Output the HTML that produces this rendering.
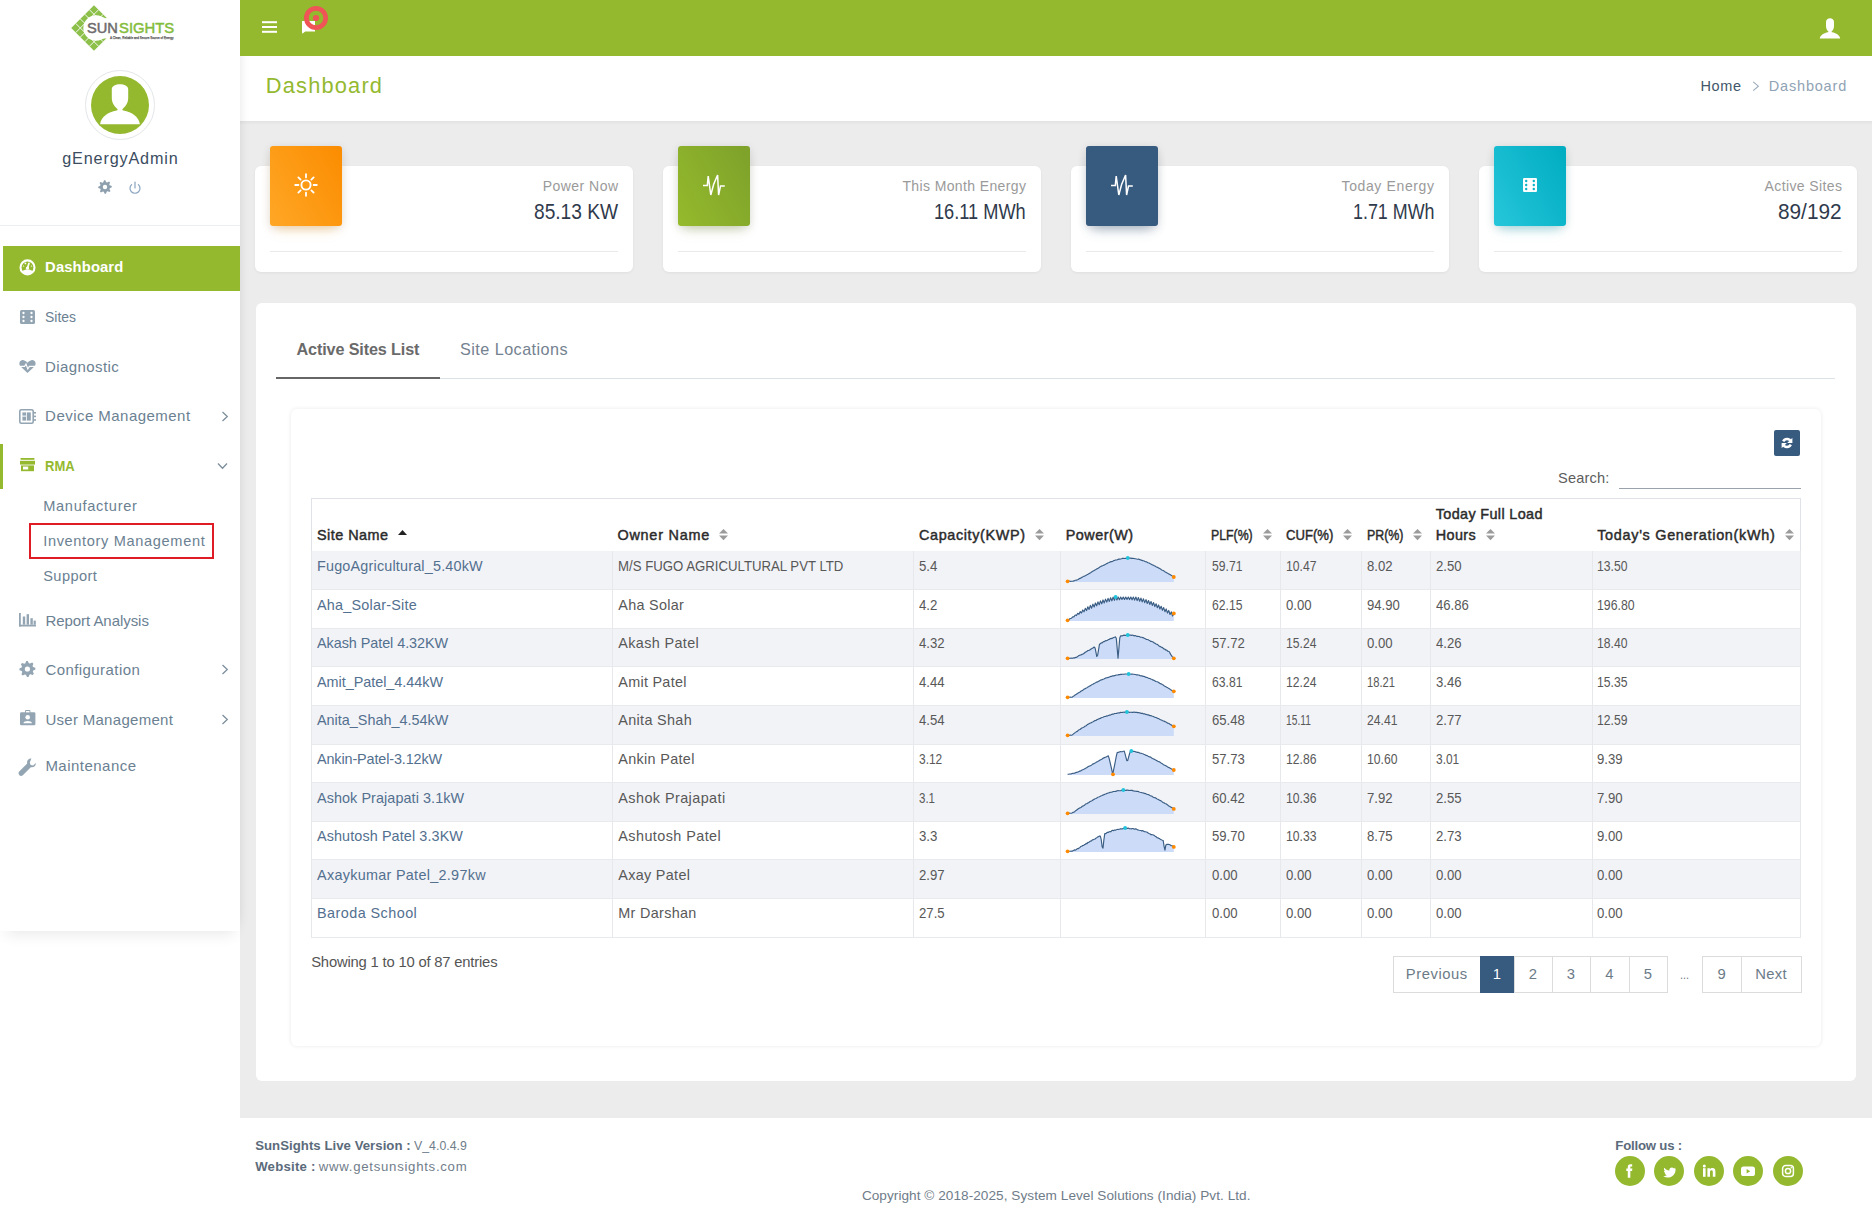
<!DOCTYPE html>
<html><head><meta charset="utf-8"><title>Dashboard</title>
<style>
*{box-sizing:border-box;margin:0;padding:0}
html,body{width:1872px;height:1223px;overflow:hidden;background:#fff;font-family:"Liberation Sans",sans-serif;position:relative}
.a{position:absolute}
svg.a{overflow:visible}
.t{position:absolute;white-space:nowrap;line-height:1}
</style></head><body>
<div class="a" style="left:240px;top:56px;width:1632px;height:65px;background:#fff"></div>
<div class="a" style="left:240px;top:121px;width:1632px;height:997px;background:#ececec"></div>
<div class="a" style="left:240px;top:121px;width:1632px;height:4px;background:linear-gradient(rgba(0,0,0,0.045),rgba(0,0,0,0))"></div>
<div class="a" style="left:0;top:0;width:240px;height:931px;background:#fff;box-shadow:0 10px 14px -6px rgba(0,0,0,0.08), 6px 0 12px -8px rgba(0,0,0,0.10)"></div>
<div class="a" style="left:240px;top:0px;width:1632px;height:56px;background:#94b92f"></div>
<svg class="a" style="left:63.9px;top:-2.3px;" width="60" height="60" viewBox="0 0 60 60"><polygon points="7.199999999999999,30 30,7.199999999999999 52.8,30 30,52.8" fill="#8cc04a"/><line x1="11.76" y1="34.56" x2="34.56" y2="11.76" stroke="#fff" stroke-width="0.9"/><line x1="11.76" y1="25.44" x2="34.56" y2="48.24" stroke="#fff" stroke-width="0.9"/><line x1="16.32" y1="39.12" x2="39.12" y2="16.32" stroke="#fff" stroke-width="0.9"/><line x1="16.32" y1="20.88" x2="39.12" y2="43.68" stroke="#fff" stroke-width="0.9"/><line x1="20.88" y1="43.68" x2="43.68" y2="20.88" stroke="#fff" stroke-width="0.9"/><line x1="20.88" y1="16.32" x2="43.68" y2="39.12" stroke="#fff" stroke-width="0.9"/><line x1="25.44" y1="48.24" x2="48.24" y2="25.44" stroke="#fff" stroke-width="0.9"/><line x1="25.44" y1="11.76" x2="48.24" y2="34.56" stroke="#fff" stroke-width="0.9"/><circle cx="32.10" cy="30" r="12.8" fill="#fff"/><rect x="32.10" y="20.10" width="40" height="20.40" fill="#fff"/></svg>
<div class="t" style="left:86.80px;top:20.16px;font-size:15.4px;color:#6e6a6b;transform:scaleX(0.9503);transform-origin:0 0;-webkit-text-stroke:0.5px #6e6a6b;">SUN</div>
<div class="t" style="left:118.60px;top:20.16px;font-size:15.4px;color:#84bd3c;transform:scaleX(0.9628);transform-origin:0 0;-webkit-text-stroke:0.5px #84bd3c;">SIGHTS</div>
<div class="t" style="left:109.50px;top:35.66px;font-size:4.3px;color:#555;transform:scaleX(0.7009);transform-origin:0 0;-webkit-text-stroke:0.25px #555;">A Clean, Reliable and Secure Source of Energy</div>
<div class="a" style="left:85.2px;top:70.2px;width:69.4px;height:69.4px;border-radius:50%;border:1px solid #e3e6e8;background:#fff"></div>
<svg class="a" style="left:91px;top:75.9px;" width="58" height="58" viewBox="0 0 58 58"><circle cx="29" cy="29" r="29" fill="#94b92f"/><path d="M20.8 13.2 C20.8 6.6 37.2 6.6 37.2 13.2 L37.2 22 C37.2 28 33.6 31 31.5 33 C31.2 33.8 31.5 34.3 32.3 34.6 C41 36.2 48 41 48.9 48.2 L9.1 48.2 C10 41 17 36.2 25.7 34.6 C26.5 34.3 26.8 33.8 26.5 33 C24.4 31 20.8 28 20.8 22 Z" fill="#fff"/></svg>
<div class="t" style="left:62.25px;top:150.09px;font-size:16.2px;color:#3b4d5f;letter-spacing:0.840px;">gEnergyAdmin</div>
<svg class="a" style="left:98px;top:180px;" width="14" height="14" viewBox="0 0 14 14"><path d="M6.00,0.27 L7.33,0.21 L8.21,2.15 L9.14,2.48 L11.05,1.54 L12.04,2.43 L11.29,4.43 L11.71,5.32 L13.73,6.00 L13.79,7.33 L11.85,8.21 L11.52,9.14 L12.46,11.05 L11.57,12.04 L9.57,11.29 L8.68,11.71 L8.00,13.73 L6.67,13.79 L5.79,11.85 L4.86,11.52 L2.95,12.46 L1.96,11.57 L2.71,9.57 L2.29,8.68 L0.27,8.00 L0.21,6.67 L2.15,5.79 L2.48,4.86 L1.54,2.95 L2.43,1.96 L4.43,2.71 L5.32,2.29 Z" fill="#8ea0ae"/><circle cx="7" cy="7" r="2.2" fill="#fff"/></svg>
<svg class="a" style="left:128px;top:180.5px;" width="14" height="14" viewBox="0 0 14 14"><path d="M3.6 3.6 A5 5 0 1 0 10.4 3.6" fill="none" stroke="#8aa4c0" stroke-width="1.2" stroke-linecap="round"/><line x1="7" y1="1.2" x2="7" y2="7" stroke="#8aa4c0" stroke-width="1.2" stroke-linecap="round"/></svg>
<div class="a" style="left:0px;top:225px;width:240px;height:1px;background:#eceef0"></div>
<div class="a" style="left:3px;top:246px;width:237px;height:45px;background:#94b92f"></div>
<svg class="a" style="left:19px;top:258.5px;" width="17" height="17" viewBox="0 0 17 17"><circle cx="8.5" cy="8.4" r="7" fill="none" stroke="#fff" stroke-width="2.1"/><path d="M3.4 12.2 C5.4 9.9 11.6 9.9 13.6 12.2 A7 7 0 0 1 3.4 12.2 Z" fill="#fff"/><line x1="8.5" y1="8.9" x2="10" y2="4.3" stroke="#fff" stroke-width="1.7" stroke-linecap="round"/><circle cx="8.5" cy="9.1" r="1.7" fill="#fff"/><circle cx="6.4" cy="4.4" r="0.85" fill="#fff"/><path d="M3.6 7.6 L5.4 7.6 L4.5 6.2 Z" fill="#fff"/><path d="M11.6 7.6 L13.4 7.6 L12.5 6.2 Z" fill="#fff"/></svg>
<div class="t" style="left:45.10px;top:259.67px;font-size:14.8px;color:#fff;font-weight:bold;letter-spacing:0.112px;">Dashboard</div>
<svg class="a" style="left:20px;top:309.8px;" width="15" height="14" viewBox="0 0 15 14"><rect x="0" y="0" width="15" height="14" rx="1.5" fill="#93a5b3"/><rect x="4.2" y="0" width="1" height="14" fill="#fff" opacity="0"/><circle cx="3.5" cy="3" r="1.15" fill="#fff"/><circle cx="3.5" cy="7" r="1.15" fill="#fff"/><circle cx="3.5" cy="11" r="1.15" fill="#fff"/><circle cx="11.5" cy="3" r="1.15" fill="#fff"/><circle cx="11.5" cy="7" r="1.15" fill="#fff"/><circle cx="11.5" cy="11" r="1.15" fill="#fff"/><rect x="5.6" y="1.5" width="3.8" height="11" fill="#93a5b3"/></svg>
<div class="t" style="left:45.10px;top:309.10px;font-size:15px;color:#6b8192;transform:scaleX(0.9296);transform-origin:0 0;">Sites</div>
<svg class="a" style="left:19px;top:359.5px;" width="17" height="13" viewBox="0 0 17 13"><path d="M8.5 13 L1.6 6.6 C-1.2 3.6 1.2 -0.6 4.6 0.2 C6.4 0.6 7.6 1.8 8.5 2.8 C9.4 1.8 10.6 0.6 12.4 0.2 C15.8 -0.6 18.2 3.6 15.4 6.6 Z" fill="#93a5b3"/><path d="M0 6.4 L5.6 6.4 L7 4 L8.8 9 L10.4 6.4 L17 6.4" fill="none" stroke="#fff" stroke-width="1.1"/></svg>
<div class="t" style="left:45.10px;top:358.50px;font-size:15px;color:#6b8192;letter-spacing:0.396px;">Diagnostic</div>
<svg class="a" style="left:19px;top:408.5px;" width="17" height="15" viewBox="0 0 17 15"><rect x="0.8" y="0.8" width="13.4" height="13.4" rx="1.5" fill="none" stroke="#93a5b3" stroke-width="1.6"/><rect x="3.4" y="3.4" width="3.6" height="3.2" fill="#93a5b3"/><rect x="3.4" y="7.6" width="3.6" height="4" fill="#93a5b3"/><rect x="7.8" y="3.4" width="4" height="8.2" fill="#93a5b3"/><rect x="15" y="3" width="2" height="1.6" fill="#93a5b3"/><rect x="15" y="6.6" width="2" height="1.6" fill="#93a5b3"/><rect x="15" y="10.2" width="2" height="1.6" fill="#93a5b3"/></svg>
<div class="t" style="left:45.10px;top:408.20px;font-size:15px;color:#6b8192;letter-spacing:0.464px;">Device Management</div>
<svg class="a" style="left:220.5px;top:411px;" width="8" height="11" viewBox="0 0 8 11"><path d="M1.5 1 L6.3 5.5 L1.5 10" fill="none" stroke="#7b8d9b" stroke-width="1.25"/></svg>
<div class="a" style="left:0px;top:444px;width:3px;height:45px;background:#94b92f"></div>
<svg class="a" style="left:20px;top:457.6px;" width="15" height="13.2" viewBox="0 0 15 13.2"><rect x="0.6" y="0" width="13.8" height="1.8" fill="#94b92f"/><path d="M0 2.8 L15 2.8 L15 6.6 L0 6.6 Z" fill="#94b92f"/><rect x="1" y="7.4" width="13" height="5.8" fill="#94b92f"/><rect x="3" y="8.6" width="5.2" height="2.9" fill="#fff"/><rect x="1" y="11.5" width="0" height="0" fill="#94b92f"/><rect x="0" y="0" width="0" height="0" fill="#94b92f"/></svg>
<div class="t" style="left:45.10px;top:457.60px;font-size:15px;color:#94b92f;font-weight:bold;transform:scaleX(0.8665);transform-origin:0 0;">RMA</div>
<svg class="a" style="left:217px;top:462px;" width="11" height="8" viewBox="0 0 11 8"><path d="M1 1.5 L5.5 6.3 L10 1.5" fill="none" stroke="#7b8d9b" stroke-width="1.25"/></svg>
<div class="t" style="left:43.20px;top:499.24px;font-size:14.6px;color:#6b8192;letter-spacing:0.707px;">Manufacturer</div>
<div class="a" style="left:29px;top:523.3px;width:185px;height:35.6px;border:2px solid #df1b25"></div>
<div class="t" style="left:43.20px;top:534.04px;font-size:14.6px;color:#6b8192;letter-spacing:0.646px;">Inventory Management</div>
<div class="t" style="left:43.20px;top:568.84px;font-size:14.6px;color:#6b8192;letter-spacing:0.427px;">Support</div>
<svg class="a" style="left:19px;top:613.3px;" width="17" height="13.5" viewBox="0 0 17 13.5"><rect x="0" y="0" width="1.8" height="13.5" fill="#93a5b3"/><rect x="0" y="11.7" width="17" height="1.8" fill="#93a5b3"/><rect x="3.8" y="3.5" width="2.4" height="8.2" fill="#93a5b3"/><rect x="7.6" y="1.2" width="2.4" height="10.5" fill="#93a5b3"/><rect x="11.4" y="5.2" width="2.4" height="6.5" fill="#93a5b3"/><rect x="14.6" y="7.6" width="2.2" height="4.1" fill="#93a5b3"/></svg>
<div class="t" style="left:45.40px;top:612.70px;font-size:15px;color:#6b8192;letter-spacing:-0.051px;">Report Analysis</div>
<svg class="a" style="left:19px;top:660.7px;" width="17" height="16" viewBox="0 0 17 16"><path d="M7.23,0.09 L8.79,0.01 L9.86,2.18 L10.97,2.58 L13.17,1.57 L14.33,2.63 L13.55,4.92 L14.05,5.98 L16.31,6.83 L16.39,8.39 L14.22,9.46 L13.82,10.57 L14.83,12.77 L13.77,13.93 L11.48,13.15 L10.42,13.65 L9.57,15.91 L8.01,15.99 L6.94,13.82 L5.83,13.42 L3.63,14.43 L2.47,13.37 L3.25,11.08 L2.75,10.02 L0.49,9.17 L0.41,7.61 L2.58,6.54 L2.98,5.43 L1.97,3.23 L3.03,2.07 L5.32,2.85 L6.38,2.35 Z" fill="#93a5b3"/><circle cx="8.4" cy="8" r="2.6" fill="#fff"/></svg>
<div class="t" style="left:45.40px;top:661.90px;font-size:15px;color:#6b8192;letter-spacing:0.431px;">Configuration</div>
<svg class="a" style="left:220.5px;top:664px;" width="8" height="11" viewBox="0 0 8 11"><path d="M1.5 1 L6.3 5.5 L1.5 10" fill="none" stroke="#7b8d9b" stroke-width="1.25"/></svg>
<svg class="a" style="left:19.6px;top:710.4px;" width="15.4" height="15.3" viewBox="0 0 15.4 15.3"><rect x="0" y="2.2" width="15.4" height="13.1" rx="1.4" fill="#93a5b3"/><rect x="5" y="0" width="5.4" height="3.6" rx="1" fill="#93a5b3"/><rect x="5.9" y="1" width="3.6" height="1.4" fill="#fff"/><circle cx="7.7" cy="7.2" r="2.3" fill="#fff"/><path d="M3.4 13.2 C3.6 10.4 11.8 10.4 12 13.2 Z" fill="#fff"/></svg>
<div class="t" style="left:45.40px;top:711.70px;font-size:15px;color:#6b8192;letter-spacing:0.293px;">User Management</div>
<svg class="a" style="left:220.5px;top:714px;" width="8" height="11" viewBox="0 0 8 11"><path d="M1.5 1 L6.3 5.5 L1.5 10" fill="none" stroke="#7b8d9b" stroke-width="1.25"/></svg>
<svg class="a" style="left:17.7px;top:757.5px;" width="18.5" height="18.5" viewBox="0 0 18.5 18.5"><path d="M13.4 0.6 C10.6 0.2 8.4 2.8 9.2 5.6 L1.2 13.6 C0.2 14.6 0.4 16.4 1.4 17.2 C2.4 18.2 3.8 18.2 4.8 17.2 L12.8 9.2 C15.6 10 18.2 7.8 17.8 5 L15.2 7.4 L12.6 7 L11.8 4.4 Z" fill="#93a5b3"/></svg>
<div class="t" style="left:45.40px;top:757.80px;font-size:15px;color:#6b8192;letter-spacing:0.481px;">Maintenance</div>
<svg class="a" style="left:262px;top:21px;" width="15" height="12" viewBox="0 0 15 12"><rect x="0" y="0.2" width="15" height="2" fill="#fff"/><rect x="0" y="5" width="15" height="2" fill="#fff"/><rect x="0" y="9.8" width="15" height="2" fill="#fff"/></svg>
<svg class="a" style="left:300px;top:19px;" width="17" height="16" viewBox="0 0 17 16"><path d="M2 2 L15 2 L15 12.5 L5.2 12.5 L2.3 14.8 L2 12.5 Z" fill="#fff"/></svg>
<svg class="a" style="left:303.1px;top:5.3px;" width="26" height="26" viewBox="0 0 26 26"><circle cx="13" cy="13" r="9.65" fill="none" stroke="#ef5457" stroke-width="4.7"/><circle cx="13" cy="13" r="3.1" fill="#ef5457"/></svg>
<svg class="a" style="left:1819px;top:17px;" width="22" height="22" viewBox="0 0 22 22"><path d="M7 5 C7 0 15 0 15 5 L15 9 C15 12 13.6 13.6 12.6 14.4 C12.4 14.8 12.6 15.1 13 15.2 C17.6 16 20.8 18.4 21.2 21.5 L0.8 21.5 C1.2 18.4 4.4 16 9 15.2 C9.4 15.1 9.6 14.8 9.4 14.4 C8.4 13.6 7 12 7 9 Z" fill="#fff"/></svg>
<div class="t" style="left:265.80px;top:74.65px;font-size:21.8px;color:#94b92f;letter-spacing:1.194px;">Dashboard</div>
<div class="t" style="left:1700.40px;top:78.63px;font-size:14.5px;color:#42576a;letter-spacing:0.674px;">Home</div>
<svg class="a" style="left:1751.5px;top:81px;" width="8" height="10.5" viewBox="0 0 8 10.5"><path d="M1.2 0.8 L6.4 5.2 L1.2 9.7" fill="none" stroke="#9aabb9" stroke-width="1.1"/></svg>
<div class="t" style="left:1768.80px;top:78.63px;font-size:14.5px;color:#90a3b4;letter-spacing:0.808px;">Dashboard</div>
<div class="a" style="left:255px;top:166px;width:378px;height:106px;background:#fff;border-radius:6px;box-shadow:0 1px 3px rgba(0,0,0,0.06)"></div>
<div class="a" style="left:270px;top:146px;width:72px;height:80px;border-radius:3px;background:linear-gradient(60deg,#ffa726,#fb8c00);box-shadow:0 8px 12px -6px rgba(255,152,0,0.35), 0 2px 10px rgba(0,0,0,0.12)"></div>
<div class="a" style="left:270px;top:251px;width:348px;height:1px;background:#e9e9e9"></div>
<div class="t" style="left:542.70px;top:179.45px;font-size:14px;color:#9a9a9a;letter-spacing:0.465px;">Power Now</div>
<div class="t" style="left:533.90px;top:200.85px;font-size:21.8px;color:#2f3a4c;transform:scaleX(0.8785);transform-origin:0 0;">85.13 KW</div>
<svg class="a" style="left:294.4px;top:172.9px;" width="24" height="24" viewBox="0 0 24 24"><circle cx="12" cy="12" r="4.6" fill="none" stroke="#fff" stroke-width="1.9"/><line x1="19.60" y1="12.00" x2="22.80" y2="12.00" stroke="#fff" stroke-width="1.8" stroke-linecap="round"/><line x1="17.37" y1="17.37" x2="19.64" y2="19.64" stroke="#fff" stroke-width="1.8" stroke-linecap="round"/><line x1="12.00" y1="19.60" x2="12.00" y2="22.80" stroke="#fff" stroke-width="1.8" stroke-linecap="round"/><line x1="6.63" y1="17.37" x2="4.36" y2="19.64" stroke="#fff" stroke-width="1.8" stroke-linecap="round"/><line x1="4.40" y1="12.00" x2="1.20" y2="12.00" stroke="#fff" stroke-width="1.8" stroke-linecap="round"/><line x1="6.63" y1="6.63" x2="4.36" y2="4.36" stroke="#fff" stroke-width="1.8" stroke-linecap="round"/><line x1="12.00" y1="4.40" x2="12.00" y2="1.20" stroke="#fff" stroke-width="1.8" stroke-linecap="round"/><line x1="17.37" y1="6.63" x2="19.64" y2="4.36" stroke="#fff" stroke-width="1.8" stroke-linecap="round"/></svg>
<div class="a" style="left:663px;top:166px;width:378px;height:106px;background:#fff;border-radius:6px;box-shadow:0 1px 3px rgba(0,0,0,0.06)"></div>
<div class="a" style="left:678px;top:146px;width:72px;height:80px;border-radius:3px;background:linear-gradient(60deg,#95ba2c,#7da12a);box-shadow:0 8px 12px -6px rgba(120,150,40,0.35), 0 2px 10px rgba(0,0,0,0.12)"></div>
<div class="a" style="left:678px;top:251px;width:348px;height:1px;background:#e9e9e9"></div>
<div class="t" style="left:902.40px;top:179.45px;font-size:14px;color:#9a9a9a;letter-spacing:0.381px;">This Month Energy</div>
<div class="t" style="left:934.30px;top:200.85px;font-size:21.8px;color:#2f3a4c;transform:scaleX(0.8347);transform-origin:0 0;">16.11 MWh</div>
<svg class="a" style="left:703px;top:174.8px;" width="22" height="22" viewBox="0 0 22 22"><path d="M0 10.5 L4.3 10.5 L5.2 1 L7.8 20 L10.6 9.5 L14.6 0 L15.6 20 L17.5 11 L21.8 11" fill="none" stroke="#fff" stroke-width="1.5" stroke-linejoin="miter" stroke-miterlimit="3"/></svg>
<div class="a" style="left:1071px;top:166px;width:378px;height:106px;background:#fff;border-radius:6px;box-shadow:0 1px 3px rgba(0,0,0,0.06)"></div>
<div class="a" style="left:1086px;top:146px;width:72px;height:80px;border-radius:3px;background:#375a7f;box-shadow:0 8px 12px -6px rgba(55,90,127,0.45), 0 2px 10px rgba(0,0,0,0.12)"></div>
<div class="a" style="left:1086px;top:251px;width:348px;height:1px;background:#e9e9e9"></div>
<div class="t" style="left:1341.50px;top:179.45px;font-size:14px;color:#9a9a9a;letter-spacing:0.626px;">Today Energy</div>
<div class="t" style="left:1352.50px;top:200.85px;font-size:21.8px;color:#2f3a4c;transform:scaleX(0.8203);transform-origin:0 0;">1.71 MWh</div>
<svg class="a" style="left:1111px;top:174.8px;" width="22" height="22" viewBox="0 0 22 22"><path d="M0 10.5 L4.3 10.5 L5.2 1 L7.8 20 L10.6 9.5 L14.6 0 L15.6 20 L17.5 11 L21.8 11" fill="none" stroke="#fff" stroke-width="1.5" stroke-linejoin="miter" stroke-miterlimit="3"/></svg>
<div class="a" style="left:1479px;top:166px;width:378px;height:106px;background:#fff;border-radius:6px;box-shadow:0 1px 3px rgba(0,0,0,0.06)"></div>
<div class="a" style="left:1494px;top:146px;width:72px;height:80px;border-radius:3px;background:linear-gradient(60deg,#26c6da,#00acc1);box-shadow:0 8px 12px -6px rgba(0,172,193,0.35), 0 2px 10px rgba(0,0,0,0.12)"></div>
<div class="a" style="left:1494px;top:251px;width:348px;height:1px;background:#e9e9e9"></div>
<div class="t" style="left:1764.50px;top:179.45px;font-size:14px;color:#9a9a9a;letter-spacing:0.396px;">Active Sites</div>
<div class="t" style="left:1778.40px;top:200.85px;font-size:21.8px;color:#2f3a4c;transform:scaleX(0.9538);transform-origin:0 0;">89/192</div>
<svg class="a" style="left:1523px;top:178px;" width="14" height="14" viewBox="0 0 14 14"><rect x="0" y="0" width="14" height="14" rx="1.3" fill="#fff"/><circle cx="3.2" cy="3" r="1.2" fill="#0fb3c8"/><circle cx="3.2" cy="7" r="1.2" fill="#0fb3c8"/><circle cx="3.2" cy="11" r="1.2" fill="#0fb3c8"/><circle cx="10.8" cy="3" r="1.2" fill="#0fb3c8"/><circle cx="10.8" cy="7" r="1.2" fill="#0fb3c8"/><circle cx="10.8" cy="11" r="1.2" fill="#0fb3c8"/><rect x="5.6" y="0" width="2.8" height="14" fill="#fff"/></svg>
<div class="a" style="left:256px;top:303px;width:1600px;height:778px;background:#fff;border-radius:6px"></div>
<div class="t" style="left:296.50px;top:340.79px;font-size:16.2px;color:#6a6a6a;font-weight:bold;letter-spacing:-0.128px;">Active Sites List</div>
<div class="t" style="left:460.00px;top:340.79px;font-size:16.2px;color:#74828f;letter-spacing:0.456px;">Site Locations</div>
<div class="a" style="left:276px;top:377.8px;width:1559px;height:1px;background:#dde2e7"></div>
<div class="a" style="left:276px;top:376.5px;width:164px;height:2.4px;background:#666"></div>
<div class="a" style="left:291px;top:409px;width:1530px;height:637px;background:#fff;border-radius:6px;box-shadow:0 0 4px rgba(0,0,0,0.09)"></div>
<div class="a" style="left:1774px;top:430.3px;width:26px;height:25.7px;background:#375a7f;border-radius:2px"></div>
<svg class="a" style="left:1781px;top:437px;" width="12" height="12" viewBox="0 0 12 12"><path d="M10 4.8 A4.3 4.3 0 0 0 2.2 4.4" fill="none" stroke="#fff" stroke-width="2.5"/><path d="M11.4 0.8 L11.4 6 L6.2 6 Z" fill="#fff"/><path d="M2 7.2 A4.3 4.3 0 0 0 9.8 7.6" fill="none" stroke="#fff" stroke-width="2.5"/><path d="M0.6 11.2 L0.6 6 L5.8 6 Z" fill="#fff"/></svg>
<div class="t" style="left:1558.10px;top:470.84px;font-size:14.6px;color:#5d5d5d;letter-spacing:0.147px;">Search:</div>
<div class="a" style="left:1619px;top:487.6px;width:182px;height:1.2px;background:#9aa3ab"></div>
<div class="a" style="left:311px;top:498px;width:1489.5px;height:53.0px;border:1px solid #dfe3e8;border-bottom:none;background:#fff"></div>
<div class="a" style="left:311px;top:551.00px;width:1489.5px;height:38.60px;background:#f2f3f7"></div>
<div class="a" style="left:311px;top:589.60px;width:1489.5px;height:38.60px;background:#fff"></div>
<div class="a" style="left:311px;top:628.20px;width:1489.5px;height:38.60px;background:#f2f3f7"></div>
<div class="a" style="left:311px;top:666.80px;width:1489.5px;height:38.60px;background:#fff"></div>
<div class="a" style="left:311px;top:705.40px;width:1489.5px;height:38.60px;background:#f2f3f7"></div>
<div class="a" style="left:311px;top:744.00px;width:1489.5px;height:38.60px;background:#fff"></div>
<div class="a" style="left:311px;top:782.60px;width:1489.5px;height:38.60px;background:#f2f3f7"></div>
<div class="a" style="left:311px;top:821.20px;width:1489.5px;height:38.60px;background:#fff"></div>
<div class="a" style="left:311px;top:859.80px;width:1489.5px;height:38.60px;background:#f2f3f7"></div>
<div class="a" style="left:311px;top:898.40px;width:1489.5px;height:38.60px;background:#fff"></div>
<div class="a" style="left:310.5px;top:551.0px;width:1px;height:386.00px;background:#e6e8ec"></div>
<div class="a" style="left:612.0px;top:551.0px;width:1px;height:386.00px;background:#e6e8ec"></div>
<div class="a" style="left:913.0px;top:551.0px;width:1px;height:386.00px;background:#e6e8ec"></div>
<div class="a" style="left:1060.0px;top:551.0px;width:1px;height:386.00px;background:#e6e8ec"></div>
<div class="a" style="left:1205.1px;top:551.0px;width:1px;height:386.00px;background:#e6e8ec"></div>
<div class="a" style="left:1279.8px;top:551.0px;width:1px;height:386.00px;background:#e6e8ec"></div>
<div class="a" style="left:1360.9px;top:551.0px;width:1px;height:386.00px;background:#e6e8ec"></div>
<div class="a" style="left:1430.0px;top:551.0px;width:1px;height:386.00px;background:#e6e8ec"></div>
<div class="a" style="left:1592.0px;top:551.0px;width:1px;height:386.00px;background:#e6e8ec"></div>
<div class="a" style="left:1800.0px;top:551.0px;width:1px;height:386.00px;background:#e6e8ec"></div>
<div class="a" style="left:311px;top:498px;width:1px;height:53.0px;background:#dfe3e8"></div>
<div class="a" style="left:1799.5px;top:498px;width:1px;height:53.0px;background:#dfe3e8"></div>
<div class="a" style="left:311px;top:589.10px;width:1489.5px;height:1px;background:#e8eaee"></div>
<div class="a" style="left:311px;top:627.70px;width:1489.5px;height:1px;background:#e8eaee"></div>
<div class="a" style="left:311px;top:666.30px;width:1489.5px;height:1px;background:#e8eaee"></div>
<div class="a" style="left:311px;top:704.90px;width:1489.5px;height:1px;background:#e8eaee"></div>
<div class="a" style="left:311px;top:743.50px;width:1489.5px;height:1px;background:#e8eaee"></div>
<div class="a" style="left:311px;top:782.10px;width:1489.5px;height:1px;background:#e8eaee"></div>
<div class="a" style="left:311px;top:820.70px;width:1489.5px;height:1px;background:#e8eaee"></div>
<div class="a" style="left:311px;top:859.30px;width:1489.5px;height:1px;background:#e8eaee"></div>
<div class="a" style="left:311px;top:897.90px;width:1489.5px;height:1px;background:#e8eaee"></div>
<div class="a" style="left:311px;top:936.50px;width:1489.5px;height:1px;background:#e8eaee"></div>
<div class="t" style="left:317.00px;top:528.11px;font-size:14.4px;color:#2b2b2b;letter-spacing:0.472px;-webkit-text-stroke:0.45px #2b2b2b;">Site Name</div>
<div class="t" style="left:617.40px;top:528.11px;font-size:14.4px;color:#2b2b2b;letter-spacing:0.797px;-webkit-text-stroke:0.45px #2b2b2b;">Owner Name</div>
<div class="t" style="left:919.00px;top:528.11px;font-size:14.4px;color:#2b2b2b;letter-spacing:0.632px;-webkit-text-stroke:0.45px #2b2b2b;">Capacity(KWP)</div>
<div class="t" style="left:1065.70px;top:528.11px;font-size:14.4px;color:#2b2b2b;letter-spacing:0.486px;-webkit-text-stroke:0.45px #2b2b2b;">Power(W)</div>
<div class="t" style="left:1211.20px;top:528.11px;font-size:14.4px;color:#2b2b2b;transform:scaleX(0.8544);transform-origin:0 0;-webkit-text-stroke:0.45px #2b2b2b;">PLF(%)</div>
<div class="t" style="left:1285.70px;top:528.11px;font-size:14.4px;color:#2b2b2b;transform:scaleX(0.9098);transform-origin:0 0;-webkit-text-stroke:0.45px #2b2b2b;">CUF(%)</div>
<div class="t" style="left:1366.50px;top:528.11px;font-size:14.4px;color:#2b2b2b;transform:scaleX(0.8609);transform-origin:0 0;-webkit-text-stroke:0.45px #2b2b2b;">PR(%)</div>
<div class="t" style="left:1435.80px;top:506.81px;font-size:14.4px;color:#2b2b2b;letter-spacing:0.359px;-webkit-text-stroke:0.45px #2b2b2b;">Today Full Load</div>
<div class="t" style="left:1435.80px;top:528.11px;font-size:14.4px;color:#2b2b2b;letter-spacing:0.347px;-webkit-text-stroke:0.45px #2b2b2b;">Hours</div>
<div class="t" style="left:1597.20px;top:528.11px;font-size:14.4px;color:#2b2b2b;letter-spacing:0.713px;-webkit-text-stroke:0.45px #2b2b2b;">Today's Generation(kWh)</div>
<svg class="a" style="left:397.8px;top:529.8px;" width="9" height="5" viewBox="0 0 9 5"><path d="M4.5 0 L9 5 L0 5 Z" fill="#222"/></svg>
<svg class="a" style="left:719.4px;top:529.4px;" width="9" height="11.2" viewBox="0 0 9 11.2"><path d="M4.5 0 L9 4.6 L0 4.6 Z" fill="#9b9b9b"/><path d="M0 6.6 L9 6.6 L4.5 11.2 Z" fill="#9b9b9b"/></svg>
<svg class="a" style="left:1034.6px;top:529.4px;" width="9" height="11.2" viewBox="0 0 9 11.2"><path d="M4.5 0 L9 4.6 L0 4.6 Z" fill="#9b9b9b"/><path d="M0 6.6 L9 6.6 L4.5 11.2 Z" fill="#9b9b9b"/></svg>
<svg class="a" style="left:1263px;top:529.4px;" width="9" height="11.2" viewBox="0 0 9 11.2"><path d="M4.5 0 L9 4.6 L0 4.6 Z" fill="#9b9b9b"/><path d="M0 6.6 L9 6.6 L4.5 11.2 Z" fill="#9b9b9b"/></svg>
<svg class="a" style="left:1343.2px;top:529.4px;" width="9" height="11.2" viewBox="0 0 9 11.2"><path d="M4.5 0 L9 4.6 L0 4.6 Z" fill="#9b9b9b"/><path d="M0 6.6 L9 6.6 L4.5 11.2 Z" fill="#9b9b9b"/></svg>
<svg class="a" style="left:1413.2px;top:529.4px;" width="9" height="11.2" viewBox="0 0 9 11.2"><path d="M4.5 0 L9 4.6 L0 4.6 Z" fill="#9b9b9b"/><path d="M0 6.6 L9 6.6 L4.5 11.2 Z" fill="#9b9b9b"/></svg>
<svg class="a" style="left:1485.7px;top:529.4px;" width="9" height="11.2" viewBox="0 0 9 11.2"><path d="M4.5 0 L9 4.6 L0 4.6 Z" fill="#9b9b9b"/><path d="M0 6.6 L9 6.6 L4.5 11.2 Z" fill="#9b9b9b"/></svg>
<svg class="a" style="left:1784.5px;top:529.4px;" width="9" height="11.2" viewBox="0 0 9 11.2"><path d="M4.5 0 L9 4.6 L0 4.6 Z" fill="#9b9b9b"/><path d="M0 6.6 L9 6.6 L4.5 11.2 Z" fill="#9b9b9b"/></svg>
<div class="t" style="left:317.00px;top:559.01px;font-size:14.4px;color:#53708f;letter-spacing:0.186px;">FugoAgricultural_5.40kW</div>
<div class="t" style="left:618.30px;top:559.01px;font-size:14.4px;color:#585858;transform:scaleX(0.9172);transform-origin:0 0;">M/S FUGO AGRICULTURAL PVT LTD</div>
<div class="t" style="left:919.40px;top:559.01px;font-size:14.4px;color:#585858;transform:scaleX(0.9200);transform-origin:0 0;">5.4</div>
<div class="t" style="left:1211.60px;top:559.01px;font-size:14.4px;color:#585858;transform:scaleX(0.8444);transform-origin:0 0;">59.71</div>
<div class="t" style="left:1286.00px;top:559.01px;font-size:14.4px;color:#585858;transform:scaleX(0.8444);transform-origin:0 0;">10.47</div>
<div class="t" style="left:1366.80px;top:559.01px;font-size:14.4px;color:#585858;transform:scaleX(0.9143);transform-origin:0 0;">8.02</div>
<div class="t" style="left:1436.00px;top:559.01px;font-size:14.4px;color:#585858;transform:scaleX(0.9143);transform-origin:0 0;">2.50</div>
<div class="t" style="left:1597.00px;top:559.01px;font-size:14.4px;color:#585858;transform:scaleX(0.8444);transform-origin:0 0;">13.50</div>
<div class="t" style="left:317.00px;top:597.61px;font-size:14.4px;color:#53708f;letter-spacing:0.225px;">Aha_Solar-Site</div>
<div class="t" style="left:618.30px;top:597.61px;font-size:14.4px;color:#585858;letter-spacing:0.284px;">Aha Solar</div>
<div class="t" style="left:919.40px;top:597.61px;font-size:14.4px;color:#585858;transform:scaleX(0.9200);transform-origin:0 0;">4.2</div>
<div class="t" style="left:1211.60px;top:597.61px;font-size:14.4px;color:#585858;transform:scaleX(0.8444);transform-origin:0 0;">62.15</div>
<div class="t" style="left:1286.00px;top:597.61px;font-size:14.4px;color:#585858;transform:scaleX(0.9143);transform-origin:0 0;">0.00</div>
<div class="t" style="left:1366.80px;top:597.61px;font-size:14.4px;color:#585858;transform:scaleX(0.9111);transform-origin:0 0;">94.90</div>
<div class="t" style="left:1436.00px;top:597.61px;font-size:14.4px;color:#585858;transform:scaleX(0.9111);transform-origin:0 0;">46.86</div>
<div class="t" style="left:1597.00px;top:597.61px;font-size:14.4px;color:#585858;transform:scaleX(0.8545);transform-origin:0 0;">196.80</div>
<div class="t" style="left:317.00px;top:636.21px;font-size:14.4px;color:#53708f;letter-spacing:-0.050px;">Akash Patel 4.32KW</div>
<div class="t" style="left:618.30px;top:636.21px;font-size:14.4px;color:#585858;letter-spacing:0.363px;">Akash Patel</div>
<div class="t" style="left:919.40px;top:636.21px;font-size:14.4px;color:#585858;transform:scaleX(0.9143);transform-origin:0 0;">4.32</div>
<div class="t" style="left:1211.60px;top:636.21px;font-size:14.4px;color:#585858;transform:scaleX(0.9111);transform-origin:0 0;">57.72</div>
<div class="t" style="left:1286.00px;top:636.21px;font-size:14.4px;color:#585858;transform:scaleX(0.8444);transform-origin:0 0;">15.24</div>
<div class="t" style="left:1366.80px;top:636.21px;font-size:14.4px;color:#585858;transform:scaleX(0.9143);transform-origin:0 0;">0.00</div>
<div class="t" style="left:1436.00px;top:636.21px;font-size:14.4px;color:#585858;transform:scaleX(0.9143);transform-origin:0 0;">4.26</div>
<div class="t" style="left:1597.00px;top:636.21px;font-size:14.4px;color:#585858;transform:scaleX(0.8444);transform-origin:0 0;">18.40</div>
<div class="t" style="left:317.00px;top:674.81px;font-size:14.4px;color:#53708f;letter-spacing:-0.025px;">Amit_Patel_4.44kW</div>
<div class="t" style="left:618.30px;top:674.81px;font-size:14.4px;color:#585858;letter-spacing:0.279px;">Amit Patel</div>
<div class="t" style="left:919.40px;top:674.81px;font-size:14.4px;color:#585858;transform:scaleX(0.9143);transform-origin:0 0;">4.44</div>
<div class="t" style="left:1211.60px;top:674.81px;font-size:14.4px;color:#585858;transform:scaleX(0.8444);transform-origin:0 0;">63.81</div>
<div class="t" style="left:1286.00px;top:674.81px;font-size:14.4px;color:#585858;transform:scaleX(0.8444);transform-origin:0 0;">12.24</div>
<div class="t" style="left:1366.80px;top:674.81px;font-size:14.4px;color:#585858;transform:scaleX(0.7778);transform-origin:0 0;">18.21</div>
<div class="t" style="left:1436.00px;top:674.81px;font-size:14.4px;color:#585858;transform:scaleX(0.9143);transform-origin:0 0;">3.46</div>
<div class="t" style="left:1597.00px;top:674.81px;font-size:14.4px;color:#585858;transform:scaleX(0.8444);transform-origin:0 0;">15.35</div>
<div class="t" style="left:317.00px;top:713.41px;font-size:14.4px;color:#53708f;letter-spacing:0.006px;">Anita_Shah_4.54kW</div>
<div class="t" style="left:618.30px;top:713.41px;font-size:14.4px;color:#585858;letter-spacing:0.333px;">Anita Shah</div>
<div class="t" style="left:919.40px;top:713.41px;font-size:14.4px;color:#585858;transform:scaleX(0.9143);transform-origin:0 0;">4.54</div>
<div class="t" style="left:1211.60px;top:713.41px;font-size:14.4px;color:#585858;transform:scaleX(0.9111);transform-origin:0 0;">65.48</div>
<div class="t" style="left:1286.00px;top:713.41px;font-size:14.4px;color:#585858;transform:scaleX(0.7111);transform-origin:0 0;">15.11</div>
<div class="t" style="left:1366.80px;top:713.41px;font-size:14.4px;color:#585858;transform:scaleX(0.8444);transform-origin:0 0;">24.41</div>
<div class="t" style="left:1436.00px;top:713.41px;font-size:14.4px;color:#585858;transform:scaleX(0.9143);transform-origin:0 0;">2.77</div>
<div class="t" style="left:1597.00px;top:713.41px;font-size:14.4px;color:#585858;transform:scaleX(0.8444);transform-origin:0 0;">12.59</div>
<div class="t" style="left:317.00px;top:752.01px;font-size:14.4px;color:#53708f;letter-spacing:-0.122px;">Ankin-Patel-3.12kW</div>
<div class="t" style="left:618.30px;top:752.01px;font-size:14.4px;color:#585858;letter-spacing:0.323px;">Ankin Patel</div>
<div class="t" style="left:919.40px;top:752.01px;font-size:14.4px;color:#585858;transform:scaleX(0.8286);transform-origin:0 0;">3.12</div>
<div class="t" style="left:1211.60px;top:752.01px;font-size:14.4px;color:#585858;transform:scaleX(0.9111);transform-origin:0 0;">57.73</div>
<div class="t" style="left:1286.00px;top:752.01px;font-size:14.4px;color:#585858;transform:scaleX(0.8444);transform-origin:0 0;">12.86</div>
<div class="t" style="left:1366.80px;top:752.01px;font-size:14.4px;color:#585858;transform:scaleX(0.8444);transform-origin:0 0;">10.60</div>
<div class="t" style="left:1436.00px;top:752.01px;font-size:14.4px;color:#585858;transform:scaleX(0.8286);transform-origin:0 0;">3.01</div>
<div class="t" style="left:1597.00px;top:752.01px;font-size:14.4px;color:#585858;transform:scaleX(0.9143);transform-origin:0 0;">9.39</div>
<div class="t" style="left:317.00px;top:790.61px;font-size:14.4px;color:#53708f;letter-spacing:0.076px;">Ashok Prajapati 3.1kW</div>
<div class="t" style="left:618.30px;top:790.61px;font-size:14.4px;color:#585858;letter-spacing:0.431px;">Ashok Prajapati</div>
<div class="t" style="left:919.40px;top:790.61px;font-size:14.4px;color:#585858;transform:scaleX(0.8000);transform-origin:0 0;">3.1</div>
<div class="t" style="left:1211.60px;top:790.61px;font-size:14.4px;color:#585858;transform:scaleX(0.9111);transform-origin:0 0;">60.42</div>
<div class="t" style="left:1286.00px;top:790.61px;font-size:14.4px;color:#585858;transform:scaleX(0.8444);transform-origin:0 0;">10.36</div>
<div class="t" style="left:1366.80px;top:790.61px;font-size:14.4px;color:#585858;transform:scaleX(0.9143);transform-origin:0 0;">7.92</div>
<div class="t" style="left:1436.00px;top:790.61px;font-size:14.4px;color:#585858;transform:scaleX(0.9143);transform-origin:0 0;">2.55</div>
<div class="t" style="left:1597.00px;top:790.61px;font-size:14.4px;color:#585858;transform:scaleX(0.9143);transform-origin:0 0;">7.90</div>
<div class="t" style="left:317.00px;top:829.21px;font-size:14.4px;color:#53708f;letter-spacing:0.102px;">Ashutosh Patel 3.3KW</div>
<div class="t" style="left:618.30px;top:829.21px;font-size:14.4px;color:#585858;letter-spacing:0.434px;">Ashutosh Patel</div>
<div class="t" style="left:919.40px;top:829.21px;font-size:14.4px;color:#585858;transform:scaleX(0.9200);transform-origin:0 0;">3.3</div>
<div class="t" style="left:1211.60px;top:829.21px;font-size:14.4px;color:#585858;transform:scaleX(0.9111);transform-origin:0 0;">59.70</div>
<div class="t" style="left:1286.00px;top:829.21px;font-size:14.4px;color:#585858;transform:scaleX(0.8444);transform-origin:0 0;">10.33</div>
<div class="t" style="left:1366.80px;top:829.21px;font-size:14.4px;color:#585858;transform:scaleX(0.9143);transform-origin:0 0;">8.75</div>
<div class="t" style="left:1436.00px;top:829.21px;font-size:14.4px;color:#585858;transform:scaleX(0.9143);transform-origin:0 0;">2.73</div>
<div class="t" style="left:1597.00px;top:829.21px;font-size:14.4px;color:#585858;transform:scaleX(0.9143);transform-origin:0 0;">9.00</div>
<div class="t" style="left:317.00px;top:867.81px;font-size:14.4px;color:#53708f;letter-spacing:0.295px;">Axaykumar Patel_2.97kw</div>
<div class="t" style="left:618.30px;top:867.81px;font-size:14.4px;color:#585858;letter-spacing:0.315px;">Axay Patel</div>
<div class="t" style="left:919.40px;top:867.81px;font-size:14.4px;color:#585858;transform:scaleX(0.9143);transform-origin:0 0;">2.97</div>
<div class="t" style="left:1211.60px;top:867.81px;font-size:14.4px;color:#585858;transform:scaleX(0.9143);transform-origin:0 0;">0.00</div>
<div class="t" style="left:1286.00px;top:867.81px;font-size:14.4px;color:#585858;transform:scaleX(0.9143);transform-origin:0 0;">0.00</div>
<div class="t" style="left:1366.80px;top:867.81px;font-size:14.4px;color:#585858;transform:scaleX(0.9143);transform-origin:0 0;">0.00</div>
<div class="t" style="left:1436.00px;top:867.81px;font-size:14.4px;color:#585858;transform:scaleX(0.9143);transform-origin:0 0;">0.00</div>
<div class="t" style="left:1597.00px;top:867.81px;font-size:14.4px;color:#585858;transform:scaleX(0.9143);transform-origin:0 0;">0.00</div>
<div class="t" style="left:317.00px;top:906.41px;font-size:14.4px;color:#53708f;letter-spacing:0.450px;">Baroda School</div>
<div class="t" style="left:618.30px;top:906.41px;font-size:14.4px;color:#585858;letter-spacing:0.319px;">Mr Darshan</div>
<div class="t" style="left:919.40px;top:906.41px;font-size:14.4px;color:#585858;transform:scaleX(0.9143);transform-origin:0 0;">27.5</div>
<div class="t" style="left:1211.60px;top:906.41px;font-size:14.4px;color:#585858;transform:scaleX(0.9143);transform-origin:0 0;">0.00</div>
<div class="t" style="left:1286.00px;top:906.41px;font-size:14.4px;color:#585858;transform:scaleX(0.9143);transform-origin:0 0;">0.00</div>
<div class="t" style="left:1366.80px;top:906.41px;font-size:14.4px;color:#585858;transform:scaleX(0.9143);transform-origin:0 0;">0.00</div>
<div class="t" style="left:1436.00px;top:906.41px;font-size:14.4px;color:#585858;transform:scaleX(0.9143);transform-origin:0 0;">0.00</div>
<div class="t" style="left:1597.00px;top:906.41px;font-size:14.4px;color:#585858;transform:scaleX(0.9143);transform-origin:0 0;">0.00</div>
<svg class="a" style="left:1060px;top:551.0px;" width="140" height="38" viewBox="0 0 140 38"><path d="M7.60,30.30 L8.48,30.28 L9.37,30.14 L10.25,30.30 L11.14,30.30 L12.02,30.25 L12.91,30.25 L13.79,29.91 L14.68,29.59 L15.56,29.23 L16.45,29.16 L17.33,28.72 L18.22,28.42 L19.11,27.75 L19.99,27.37 L20.88,27.18 L21.76,26.38 L22.64,25.93 L23.53,25.57 L24.41,25.10 L25.30,24.78 L26.18,24.33 L27.07,23.64 L27.95,23.30 L28.84,22.74 L29.72,22.20 L30.61,21.75 L31.49,21.07 L32.38,20.55 L33.26,19.88 L34.15,19.48 L35.03,18.91 L35.92,18.45 L36.80,17.87 L37.69,17.44 L38.57,17.00 L39.46,16.23 L40.35,15.74 L41.23,15.31 L42.12,14.88 L43.00,14.56 L43.88,14.13 L44.77,13.66 L45.65,13.31 L46.54,12.62 L47.42,12.34 L48.31,11.77 L49.19,11.55 L50.08,10.97 L50.96,10.65 L51.85,10.61 L52.73,10.20 L53.62,9.63 L54.50,9.49 L55.39,9.02 L56.27,8.97 L57.16,8.84 L58.04,8.40 L58.93,8.13 L59.81,8.12 L60.70,8.01 L61.59,7.76 L62.47,7.38 L63.36,7.34 L64.24,7.47 L65.12,7.34 L66.01,7.33 L66.89,7.30 L67.78,7.00 L68.66,7.22 L69.55,7.10 L70.43,7.17 L71.32,7.32 L72.20,7.19 L73.09,7.50 L73.97,7.43 L74.86,7.75 L75.74,7.79 L76.63,8.03 L77.51,8.20 L78.40,8.14 L79.28,8.42 L80.17,8.85 L81.05,8.89 L81.94,9.41 L82.83,9.64 L83.71,9.77 L84.60,10.17 L85.48,10.71 L86.37,10.74 L87.25,11.39 L88.13,11.76 L89.02,11.96 L89.90,12.53 L90.79,12.96 L91.67,13.48 L92.56,13.91 L93.44,14.18 L94.33,14.77 L95.21,15.11 L96.10,15.68 L96.98,16.14 L97.87,16.44 L98.75,17.12 L99.64,17.60 L100.52,18.00 L101.41,18.77 L102.30,19.30 L103.18,19.54 L104.07,20.10 L104.95,20.83 L105.84,21.38 L106.72,21.70 L107.61,22.15 L108.49,22.94 L109.38,23.18 L110.26,23.71 L111.14,24.32 L112.03,24.88 L112.91,25.49 L113.80,25.99 L113.80,31.10 L7.60,31.10 Z" fill="#cbdbf8" stroke="none"/><path d="M7.60,30.30 L8.48,30.28 L9.37,30.14 L10.25,30.30 L11.14,30.30 L12.02,30.25 L12.91,30.25 L13.79,29.91 L14.68,29.59 L15.56,29.23 L16.45,29.16 L17.33,28.72 L18.22,28.42 L19.11,27.75 L19.99,27.37 L20.88,27.18 L21.76,26.38 L22.64,25.93 L23.53,25.57 L24.41,25.10 L25.30,24.78 L26.18,24.33 L27.07,23.64 L27.95,23.30 L28.84,22.74 L29.72,22.20 L30.61,21.75 L31.49,21.07 L32.38,20.55 L33.26,19.88 L34.15,19.48 L35.03,18.91 L35.92,18.45 L36.80,17.87 L37.69,17.44 L38.57,17.00 L39.46,16.23 L40.35,15.74 L41.23,15.31 L42.12,14.88 L43.00,14.56 L43.88,14.13 L44.77,13.66 L45.65,13.31 L46.54,12.62 L47.42,12.34 L48.31,11.77 L49.19,11.55 L50.08,10.97 L50.96,10.65 L51.85,10.61 L52.73,10.20 L53.62,9.63 L54.50,9.49 L55.39,9.02 L56.27,8.97 L57.16,8.84 L58.04,8.40 L58.93,8.13 L59.81,8.12 L60.70,8.01 L61.59,7.76 L62.47,7.38 L63.36,7.34 L64.24,7.47 L65.12,7.34 L66.01,7.33 L66.89,7.30 L67.78,7.00 L68.66,7.22 L69.55,7.10 L70.43,7.17 L71.32,7.32 L72.20,7.19 L73.09,7.50 L73.97,7.43 L74.86,7.75 L75.74,7.79 L76.63,8.03 L77.51,8.20 L78.40,8.14 L79.28,8.42 L80.17,8.85 L81.05,8.89 L81.94,9.41 L82.83,9.64 L83.71,9.77 L84.60,10.17 L85.48,10.71 L86.37,10.74 L87.25,11.39 L88.13,11.76 L89.02,11.96 L89.90,12.53 L90.79,12.96 L91.67,13.48 L92.56,13.91 L93.44,14.18 L94.33,14.77 L95.21,15.11 L96.10,15.68 L96.98,16.14 L97.87,16.44 L98.75,17.12 L99.64,17.60 L100.52,18.00 L101.41,18.77 L102.30,19.30 L103.18,19.54 L104.07,20.10 L104.95,20.83 L105.84,21.38 L106.72,21.70 L107.61,22.15 L108.49,22.94 L109.38,23.18 L110.26,23.71 L111.14,24.32 L112.03,24.88 L112.91,25.49 L113.80,25.99" fill="none" stroke="#3a5d84" stroke-width="1.15" stroke-linejoin="round"/><circle cx="7.60" cy="30.30" r="1.9" fill="#ff8a00"/><circle cx="113.80" cy="25.99" r="1.9" fill="#ff8a00"/><circle cx="67.78" cy="7.00" r="1.9" fill="#22c4dc"/></svg>
<svg class="a" style="left:1060px;top:589.6px;" width="140" height="38" viewBox="0 0 140 38"><path d="M7.60,30.30 L8.86,29.62 L10.13,28.53 L11.39,28.26 L12.66,26.77 L13.92,26.91 L15.19,25.03 L16.45,25.58 L17.71,23.30 L18.98,24.27 L20.24,21.61 L21.51,23.00 L22.77,19.96 L24.04,21.77 L25.30,18.34 L26.56,20.58 L27.83,16.78 L29.09,19.43 L30.36,15.40 L31.62,18.16 L32.89,14.16 L34.15,16.96 L35.41,12.99 L36.68,15.82 L37.94,11.89 L39.21,14.77 L40.47,10.88 L41.74,13.79 L43.00,9.95 L44.26,12.91 L45.53,9.11 L46.79,12.11 L48.06,8.36 L49.32,11.42 L50.59,7.71 L51.85,10.81 L53.11,7.16 L54.38,10.32 L55.64,7.00 L56.91,9.92 L58.17,7.00 L59.44,9.63 L60.70,7.00 L61.96,9.45 L63.23,7.00 L64.49,9.38 L65.76,7.00 L67.02,9.41 L68.29,7.00 L69.55,9.56 L70.81,7.00 L72.08,9.81 L73.34,7.00 L74.61,10.16 L75.87,7.00 L77.14,10.63 L78.40,7.50 L79.66,11.19 L80.93,8.12 L82.19,11.85 L83.46,8.83 L84.72,12.61 L85.99,9.64 L87.25,13.47 L88.51,10.54 L89.78,14.41 L91.04,11.52 L92.31,15.44 L93.57,12.59 L94.84,16.54 L96.10,13.73 L97.36,17.73 L98.63,14.95 L99.89,18.97 L101.16,16.23 L102.42,20.29 L103.69,17.57 L104.95,21.65 L106.21,18.96 L107.48,23.07 L108.74,20.40 L110.01,24.53 L111.27,21.88 L112.54,26.03 L113.80,23.39 L113.80,31.10 L7.60,31.10 Z" fill="#cbdbf8" stroke="none"/><path d="M7.60,30.30 L8.86,29.62 L10.13,28.53 L11.39,28.26 L12.66,26.77 L13.92,26.91 L15.19,25.03 L16.45,25.58 L17.71,23.30 L18.98,24.27 L20.24,21.61 L21.51,23.00 L22.77,19.96 L24.04,21.77 L25.30,18.34 L26.56,20.58 L27.83,16.78 L29.09,19.43 L30.36,15.40 L31.62,18.16 L32.89,14.16 L34.15,16.96 L35.41,12.99 L36.68,15.82 L37.94,11.89 L39.21,14.77 L40.47,10.88 L41.74,13.79 L43.00,9.95 L44.26,12.91 L45.53,9.11 L46.79,12.11 L48.06,8.36 L49.32,11.42 L50.59,7.71 L51.85,10.81 L53.11,7.16 L54.38,10.32 L55.64,7.00 L56.91,9.92 L58.17,7.00 L59.44,9.63 L60.70,7.00 L61.96,9.45 L63.23,7.00 L64.49,9.38 L65.76,7.00 L67.02,9.41 L68.29,7.00 L69.55,9.56 L70.81,7.00 L72.08,9.81 L73.34,7.00 L74.61,10.16 L75.87,7.00 L77.14,10.63 L78.40,7.50 L79.66,11.19 L80.93,8.12 L82.19,11.85 L83.46,8.83 L84.72,12.61 L85.99,9.64 L87.25,13.47 L88.51,10.54 L89.78,14.41 L91.04,11.52 L92.31,15.44 L93.57,12.59 L94.84,16.54 L96.10,13.73 L97.36,17.73 L98.63,14.95 L99.89,18.97 L101.16,16.23 L102.42,20.29 L103.69,17.57 L104.95,21.65 L106.21,18.96 L107.48,23.07 L108.74,20.40 L110.01,24.53 L111.27,21.88 L112.54,26.03 L113.80,23.39" fill="none" stroke="#3a5d84" stroke-width="1.15" stroke-linejoin="round"/><circle cx="7.60" cy="30.30" r="1.9" fill="#ff8a00"/><circle cx="113.80" cy="23.39" r="1.9" fill="#ff8a00"/><circle cx="55.64" cy="7.00" r="1.9" fill="#22c4dc"/></svg>
<svg class="a" style="left:1060px;top:628.2px;" width="140" height="38" viewBox="0 0 140 38"><path d="M7.60,30.30 L8.48,30.18 L9.37,30.30 L10.25,30.30 L11.14,30.02 L12.02,30.19 L12.91,30.30 L13.79,29.83 L14.68,29.94 L15.56,29.37 L16.45,29.33 L17.33,28.77 L18.22,28.09 L19.11,27.58 L19.99,27.15 L20.88,27.03 L21.76,26.41 L22.64,26.10 L23.53,25.72 L24.41,24.96 L25.30,24.20 L26.18,23.67 L27.07,23.24 L27.95,22.54 L28.84,22.47 L29.72,22.01 L30.61,21.28 L31.49,20.86 L32.38,20.37 L33.26,19.70 L34.15,19.02 L35.03,19.82 L35.92,24.06 L36.80,28.53 L37.69,27.00 L38.57,21.76 L39.46,16.31 L40.35,15.85 L41.23,14.79 L42.12,14.89 L43.00,13.97 L43.88,13.61 L44.77,13.35 L45.65,12.59 L46.54,12.71 L47.42,12.22 L48.31,11.61 L49.19,11.53 L50.08,10.61 L50.96,10.67 L51.85,10.41 L52.73,10.15 L53.62,9.45 L54.50,9.29 L55.39,8.89 L56.27,10.23 L57.16,20.11 L58.04,30.30 L58.93,19.96 L59.81,9.76 L60.70,7.76 L61.59,7.83 L62.47,7.82 L63.36,7.39 L64.24,7.14 L65.12,7.44 L66.01,7.33 L66.89,7.25 L67.78,7.00 L68.66,7.13 L69.55,7.10 L70.43,7.05 L71.32,7.37 L72.20,7.18 L73.09,7.21 L73.97,7.90 L74.86,7.46 L75.74,7.77 L76.63,8.36 L77.51,8.34 L78.40,8.43 L79.28,8.47 L80.17,9.09 L81.05,9.23 L81.94,9.30 L82.83,9.66 L83.71,9.88 L84.60,10.54 L85.48,10.76 L86.37,11.44 L87.25,11.46 L88.13,11.78 L89.02,12.31 L89.90,12.67 L90.79,13.45 L91.67,13.42 L92.56,13.82 L93.44,14.28 L94.33,15.06 L95.21,15.37 L96.10,16.19 L96.98,16.28 L97.87,16.82 L98.75,17.69 L99.64,18.39 L100.52,18.66 L101.41,19.12 L102.30,19.50 L103.18,20.23 L104.07,21.08 L104.95,21.08 L105.84,22.13 L106.72,22.16 L107.61,23.13 L108.49,23.55 L109.38,23.76 L110.26,25.66 L111.14,27.14 L112.03,28.30 L112.91,29.37 L113.80,30.30 L113.80,31.10 L7.60,31.10 Z" fill="#cbdbf8" stroke="none"/><path d="M7.60,30.30 L8.48,30.18 L9.37,30.30 L10.25,30.30 L11.14,30.02 L12.02,30.19 L12.91,30.30 L13.79,29.83 L14.68,29.94 L15.56,29.37 L16.45,29.33 L17.33,28.77 L18.22,28.09 L19.11,27.58 L19.99,27.15 L20.88,27.03 L21.76,26.41 L22.64,26.10 L23.53,25.72 L24.41,24.96 L25.30,24.20 L26.18,23.67 L27.07,23.24 L27.95,22.54 L28.84,22.47 L29.72,22.01 L30.61,21.28 L31.49,20.86 L32.38,20.37 L33.26,19.70 L34.15,19.02 L35.03,19.82 L35.92,24.06 L36.80,28.53 L37.69,27.00 L38.57,21.76 L39.46,16.31 L40.35,15.85 L41.23,14.79 L42.12,14.89 L43.00,13.97 L43.88,13.61 L44.77,13.35 L45.65,12.59 L46.54,12.71 L47.42,12.22 L48.31,11.61 L49.19,11.53 L50.08,10.61 L50.96,10.67 L51.85,10.41 L52.73,10.15 L53.62,9.45 L54.50,9.29 L55.39,8.89 L56.27,10.23 L57.16,20.11 L58.04,30.30 L58.93,19.96 L59.81,9.76 L60.70,7.76 L61.59,7.83 L62.47,7.82 L63.36,7.39 L64.24,7.14 L65.12,7.44 L66.01,7.33 L66.89,7.25 L67.78,7.00 L68.66,7.13 L69.55,7.10 L70.43,7.05 L71.32,7.37 L72.20,7.18 L73.09,7.21 L73.97,7.90 L74.86,7.46 L75.74,7.77 L76.63,8.36 L77.51,8.34 L78.40,8.43 L79.28,8.47 L80.17,9.09 L81.05,9.23 L81.94,9.30 L82.83,9.66 L83.71,9.88 L84.60,10.54 L85.48,10.76 L86.37,11.44 L87.25,11.46 L88.13,11.78 L89.02,12.31 L89.90,12.67 L90.79,13.45 L91.67,13.42 L92.56,13.82 L93.44,14.28 L94.33,15.06 L95.21,15.37 L96.10,16.19 L96.98,16.28 L97.87,16.82 L98.75,17.69 L99.64,18.39 L100.52,18.66 L101.41,19.12 L102.30,19.50 L103.18,20.23 L104.07,21.08 L104.95,21.08 L105.84,22.13 L106.72,22.16 L107.61,23.13 L108.49,23.55 L109.38,23.76 L110.26,25.66 L111.14,27.14 L112.03,28.30 L112.91,29.37 L113.80,30.30" fill="none" stroke="#3a5d84" stroke-width="1.15" stroke-linejoin="round"/><circle cx="7.60" cy="30.30" r="1.9" fill="#ff8a00"/><circle cx="113.80" cy="30.30" r="1.9" fill="#ff8a00"/><circle cx="67.78" cy="7.00" r="1.9" fill="#22c4dc"/></svg>
<svg class="a" style="left:1060px;top:666.8px;" width="140" height="38" viewBox="0 0 140 38"><path d="M7.60,30.30 L8.48,30.13 L9.37,30.30 L10.25,30.13 L11.14,30.30 L12.02,30.29 L12.91,29.59 L13.79,29.09 L14.68,28.35 L15.56,27.80 L16.45,27.26 L17.33,26.56 L18.22,26.09 L19.11,25.61 L19.99,25.01 L20.88,24.27 L21.76,23.69 L22.64,23.39 L23.53,22.59 L24.41,22.00 L25.30,21.62 L26.18,21.06 L27.07,20.66 L27.95,20.01 L28.84,19.50 L29.72,18.95 L30.61,18.66 L31.49,17.80 L32.38,17.48 L33.26,17.04 L34.15,16.41 L35.03,16.04 L35.92,15.60 L36.80,15.08 L37.69,14.87 L38.57,14.27 L39.46,13.89 L40.35,13.28 L41.23,12.90 L42.12,12.75 L43.00,12.30 L43.88,12.06 L44.77,11.59 L45.65,11.11 L46.54,10.75 L47.42,10.59 L48.31,10.34 L49.19,10.10 L50.08,9.66 L50.96,9.28 L51.85,9.32 L52.73,8.84 L53.62,8.89 L54.50,8.61 L55.39,8.40 L56.27,8.04 L57.16,8.01 L58.04,7.84 L58.93,7.59 L59.81,7.66 L60.70,7.31 L61.59,7.43 L62.47,7.20 L63.36,7.23 L64.24,7.19 L65.12,7.02 L66.01,7.03 L66.89,7.04 L67.78,7.03 L68.66,7.00 L69.55,7.17 L70.43,7.20 L71.32,7.10 L72.20,7.17 L73.09,7.30 L73.97,7.28 L74.86,7.49 L75.74,7.53 L76.63,7.91 L77.51,7.88 L78.40,8.03 L79.28,8.18 L80.17,8.61 L81.05,8.82 L81.94,8.83 L82.83,9.33 L83.71,9.30 L84.60,9.61 L85.48,10.17 L86.37,10.43 L87.25,10.55 L88.13,11.05 L89.02,11.44 L89.90,11.51 L90.79,12.02 L91.67,12.25 L92.56,12.88 L93.44,13.16 L94.33,13.46 L95.21,14.12 L96.10,14.47 L96.98,14.72 L97.87,15.08 L98.75,15.51 L99.64,16.29 L100.52,16.61 L101.41,16.99 L102.30,17.57 L103.18,18.00 L104.07,18.69 L104.95,19.24 L105.84,19.74 L106.72,20.29 L107.61,20.63 L108.49,21.18 L109.38,21.70 L110.26,22.40 L111.14,22.94 L112.03,23.49 L112.91,23.81 L113.80,24.32 L113.80,31.10 L7.60,31.10 Z" fill="#cbdbf8" stroke="none"/><path d="M7.60,30.30 L8.48,30.13 L9.37,30.30 L10.25,30.13 L11.14,30.30 L12.02,30.29 L12.91,29.59 L13.79,29.09 L14.68,28.35 L15.56,27.80 L16.45,27.26 L17.33,26.56 L18.22,26.09 L19.11,25.61 L19.99,25.01 L20.88,24.27 L21.76,23.69 L22.64,23.39 L23.53,22.59 L24.41,22.00 L25.30,21.62 L26.18,21.06 L27.07,20.66 L27.95,20.01 L28.84,19.50 L29.72,18.95 L30.61,18.66 L31.49,17.80 L32.38,17.48 L33.26,17.04 L34.15,16.41 L35.03,16.04 L35.92,15.60 L36.80,15.08 L37.69,14.87 L38.57,14.27 L39.46,13.89 L40.35,13.28 L41.23,12.90 L42.12,12.75 L43.00,12.30 L43.88,12.06 L44.77,11.59 L45.65,11.11 L46.54,10.75 L47.42,10.59 L48.31,10.34 L49.19,10.10 L50.08,9.66 L50.96,9.28 L51.85,9.32 L52.73,8.84 L53.62,8.89 L54.50,8.61 L55.39,8.40 L56.27,8.04 L57.16,8.01 L58.04,7.84 L58.93,7.59 L59.81,7.66 L60.70,7.31 L61.59,7.43 L62.47,7.20 L63.36,7.23 L64.24,7.19 L65.12,7.02 L66.01,7.03 L66.89,7.04 L67.78,7.03 L68.66,7.00 L69.55,7.17 L70.43,7.20 L71.32,7.10 L72.20,7.17 L73.09,7.30 L73.97,7.28 L74.86,7.49 L75.74,7.53 L76.63,7.91 L77.51,7.88 L78.40,8.03 L79.28,8.18 L80.17,8.61 L81.05,8.82 L81.94,8.83 L82.83,9.33 L83.71,9.30 L84.60,9.61 L85.48,10.17 L86.37,10.43 L87.25,10.55 L88.13,11.05 L89.02,11.44 L89.90,11.51 L90.79,12.02 L91.67,12.25 L92.56,12.88 L93.44,13.16 L94.33,13.46 L95.21,14.12 L96.10,14.47 L96.98,14.72 L97.87,15.08 L98.75,15.51 L99.64,16.29 L100.52,16.61 L101.41,16.99 L102.30,17.57 L103.18,18.00 L104.07,18.69 L104.95,19.24 L105.84,19.74 L106.72,20.29 L107.61,20.63 L108.49,21.18 L109.38,21.70 L110.26,22.40 L111.14,22.94 L112.03,23.49 L112.91,23.81 L113.80,24.32" fill="none" stroke="#3a5d84" stroke-width="1.15" stroke-linejoin="round"/><circle cx="7.60" cy="30.30" r="1.9" fill="#ff8a00"/><circle cx="113.80" cy="24.32" r="1.9" fill="#ff8a00"/><circle cx="68.66" cy="7.00" r="1.9" fill="#22c4dc"/></svg>
<svg class="a" style="left:1060px;top:705.4px;" width="140" height="38" viewBox="0 0 140 38"><path d="M7.60,30.30 L8.48,30.30 L9.37,30.30 L10.25,30.05 L11.14,30.30 L12.02,29.96 L12.91,29.43 L13.79,28.66 L14.68,27.97 L15.56,27.37 L16.45,26.65 L17.33,26.37 L18.22,25.38 L19.11,24.71 L19.99,24.50 L20.88,23.78 L21.76,23.06 L22.64,22.69 L23.53,22.27 L24.41,21.75 L25.30,21.03 L26.18,20.78 L27.07,19.78 L27.95,19.33 L28.84,18.89 L29.72,18.32 L30.61,17.97 L31.49,17.62 L32.38,17.05 L33.26,16.66 L34.15,15.95 L35.03,15.61 L35.92,15.49 L36.80,14.71 L37.69,14.40 L38.57,13.98 L39.46,13.57 L40.35,13.42 L41.23,12.78 L42.12,12.43 L43.00,12.19 L43.88,11.81 L44.77,11.49 L45.65,11.37 L46.54,10.89 L47.42,10.96 L48.31,10.52 L49.19,10.18 L50.08,10.17 L50.96,9.73 L51.85,9.33 L52.73,9.11 L53.62,9.11 L54.50,8.51 L55.39,8.47 L56.27,8.47 L57.16,8.12 L58.04,8.01 L58.93,7.89 L59.81,7.83 L60.70,7.37 L61.59,7.46 L62.47,7.33 L63.36,7.21 L64.24,7.01 L65.12,7.49 L66.01,7.11 L66.89,7.00 L67.78,7.24 L68.66,7.15 L69.55,7.35 L70.43,7.28 L71.32,7.20 L72.20,7.39 L73.09,7.36 L73.97,7.05 L74.86,7.32 L75.74,7.43 L76.63,7.28 L77.51,7.61 L78.40,7.49 L79.28,7.82 L80.17,7.87 L81.05,8.44 L81.94,8.32 L82.83,8.41 L83.71,9.00 L84.60,8.71 L85.48,9.36 L86.37,9.41 L87.25,9.82 L88.13,9.89 L89.02,10.09 L89.90,10.67 L90.79,10.46 L91.67,11.05 L92.56,11.29 L93.44,11.57 L94.33,12.02 L95.21,12.40 L96.10,12.55 L96.98,12.96 L97.87,13.48 L98.75,13.61 L99.64,14.24 L100.52,14.79 L101.41,15.07 L102.30,15.59 L103.18,15.96 L104.07,16.06 L104.95,16.70 L105.84,16.87 L106.72,17.41 L107.61,18.27 L108.49,18.23 L109.38,18.74 L110.26,19.72 L111.14,19.76 L112.03,20.53 L112.91,21.03 L113.80,21.28 L113.80,31.10 L7.60,31.10 Z" fill="#cbdbf8" stroke="none"/><path d="M7.60,30.30 L8.48,30.30 L9.37,30.30 L10.25,30.05 L11.14,30.30 L12.02,29.96 L12.91,29.43 L13.79,28.66 L14.68,27.97 L15.56,27.37 L16.45,26.65 L17.33,26.37 L18.22,25.38 L19.11,24.71 L19.99,24.50 L20.88,23.78 L21.76,23.06 L22.64,22.69 L23.53,22.27 L24.41,21.75 L25.30,21.03 L26.18,20.78 L27.07,19.78 L27.95,19.33 L28.84,18.89 L29.72,18.32 L30.61,17.97 L31.49,17.62 L32.38,17.05 L33.26,16.66 L34.15,15.95 L35.03,15.61 L35.92,15.49 L36.80,14.71 L37.69,14.40 L38.57,13.98 L39.46,13.57 L40.35,13.42 L41.23,12.78 L42.12,12.43 L43.00,12.19 L43.88,11.81 L44.77,11.49 L45.65,11.37 L46.54,10.89 L47.42,10.96 L48.31,10.52 L49.19,10.18 L50.08,10.17 L50.96,9.73 L51.85,9.33 L52.73,9.11 L53.62,9.11 L54.50,8.51 L55.39,8.47 L56.27,8.47 L57.16,8.12 L58.04,8.01 L58.93,7.89 L59.81,7.83 L60.70,7.37 L61.59,7.46 L62.47,7.33 L63.36,7.21 L64.24,7.01 L65.12,7.49 L66.01,7.11 L66.89,7.00 L67.78,7.24 L68.66,7.15 L69.55,7.35 L70.43,7.28 L71.32,7.20 L72.20,7.39 L73.09,7.36 L73.97,7.05 L74.86,7.32 L75.74,7.43 L76.63,7.28 L77.51,7.61 L78.40,7.49 L79.28,7.82 L80.17,7.87 L81.05,8.44 L81.94,8.32 L82.83,8.41 L83.71,9.00 L84.60,8.71 L85.48,9.36 L86.37,9.41 L87.25,9.82 L88.13,9.89 L89.02,10.09 L89.90,10.67 L90.79,10.46 L91.67,11.05 L92.56,11.29 L93.44,11.57 L94.33,12.02 L95.21,12.40 L96.10,12.55 L96.98,12.96 L97.87,13.48 L98.75,13.61 L99.64,14.24 L100.52,14.79 L101.41,15.07 L102.30,15.59 L103.18,15.96 L104.07,16.06 L104.95,16.70 L105.84,16.87 L106.72,17.41 L107.61,18.27 L108.49,18.23 L109.38,18.74 L110.26,19.72 L111.14,19.76 L112.03,20.53 L112.91,21.03 L113.80,21.28" fill="none" stroke="#3a5d84" stroke-width="1.15" stroke-linejoin="round"/><circle cx="7.60" cy="30.30" r="1.9" fill="#ff8a00"/><circle cx="113.80" cy="21.28" r="1.9" fill="#ff8a00"/><circle cx="66.89" cy="7.00" r="1.9" fill="#22c4dc"/></svg>
<svg class="a" style="left:1060px;top:744.0px;" width="140" height="38" viewBox="0 0 140 38"><path d="M7.60,30.30 L8.48,30.25 L9.37,30.01 L10.25,29.97 L11.14,29.91 L12.02,29.53 L12.91,29.38 L13.79,29.22 L14.68,29.14 L15.56,28.67 L16.45,28.43 L17.33,28.20 L18.22,27.91 L19.11,27.37 L19.99,27.14 L20.88,26.63 L21.76,26.13 L22.64,25.79 L23.53,25.43 L24.41,24.86 L25.30,24.46 L26.18,23.86 L27.07,23.48 L27.95,22.82 L28.84,22.35 L29.72,21.93 L30.61,21.61 L31.49,21.15 L32.38,20.35 L33.26,19.88 L34.15,19.43 L35.03,19.02 L35.92,18.54 L36.80,17.87 L37.69,17.41 L38.57,16.90 L39.46,16.38 L40.35,15.84 L41.23,15.56 L42.12,15.06 L43.00,14.31 L43.88,13.87 L44.77,13.43 L45.65,13.30 L46.54,12.85 L47.42,12.35 L48.31,11.88 L49.19,14.56 L50.08,18.37 L50.96,22.13 L51.85,26.18 L52.73,30.30 L53.62,25.99 L54.50,21.57 L55.39,17.01 L56.27,12.43 L57.16,8.56 L58.04,8.43 L58.93,8.16 L59.81,7.81 L60.70,7.60 L61.59,7.73 L62.47,7.57 L63.36,7.20 L64.24,7.17 L65.12,10.09 L66.01,13.53 L66.89,16.76 L67.78,16.39 L68.66,12.93 L69.55,9.76 L70.43,7.06 L71.32,7.00 L72.20,7.34 L73.09,7.37 L73.97,7.42 L74.86,7.51 L75.74,7.86 L76.63,8.08 L77.51,8.39 L78.40,8.33 L79.28,8.87 L80.17,9.14 L81.05,9.24 L81.94,9.57 L82.83,9.82 L83.71,10.29 L84.60,10.47 L85.48,11.09 L86.37,11.42 L87.25,11.65 L88.13,12.27 L89.02,12.61 L89.90,12.88 L90.79,13.34 L91.67,13.94 L92.56,14.46 L93.44,14.85 L94.33,15.19 L95.21,15.81 L96.10,16.39 L96.98,16.67 L97.87,17.23 L98.75,17.60 L99.64,18.10 L100.52,18.62 L101.41,19.31 L102.30,19.69 L103.18,20.39 L104.07,20.89 L104.95,21.37 L105.84,21.67 L106.72,22.19 L107.61,22.92 L108.49,23.37 L109.38,23.84 L110.26,24.31 L111.14,24.76 L112.03,25.22 L112.91,25.73 L113.80,26.02 L113.80,31.10 L7.60,31.10 Z" fill="#cbdbf8" stroke="none"/><path d="M7.60,30.30 L8.48,30.25 L9.37,30.01 L10.25,29.97 L11.14,29.91 L12.02,29.53 L12.91,29.38 L13.79,29.22 L14.68,29.14 L15.56,28.67 L16.45,28.43 L17.33,28.20 L18.22,27.91 L19.11,27.37 L19.99,27.14 L20.88,26.63 L21.76,26.13 L22.64,25.79 L23.53,25.43 L24.41,24.86 L25.30,24.46 L26.18,23.86 L27.07,23.48 L27.95,22.82 L28.84,22.35 L29.72,21.93 L30.61,21.61 L31.49,21.15 L32.38,20.35 L33.26,19.88 L34.15,19.43 L35.03,19.02 L35.92,18.54 L36.80,17.87 L37.69,17.41 L38.57,16.90 L39.46,16.38 L40.35,15.84 L41.23,15.56 L42.12,15.06 L43.00,14.31 L43.88,13.87 L44.77,13.43 L45.65,13.30 L46.54,12.85 L47.42,12.35 L48.31,11.88 L49.19,14.56 L50.08,18.37 L50.96,22.13 L51.85,26.18 L52.73,30.30 L53.62,25.99 L54.50,21.57 L55.39,17.01 L56.27,12.43 L57.16,8.56 L58.04,8.43 L58.93,8.16 L59.81,7.81 L60.70,7.60 L61.59,7.73 L62.47,7.57 L63.36,7.20 L64.24,7.17 L65.12,10.09 L66.01,13.53 L66.89,16.76 L67.78,16.39 L68.66,12.93 L69.55,9.76 L70.43,7.06 L71.32,7.00 L72.20,7.34 L73.09,7.37 L73.97,7.42 L74.86,7.51 L75.74,7.86 L76.63,8.08 L77.51,8.39 L78.40,8.33 L79.28,8.87 L80.17,9.14 L81.05,9.24 L81.94,9.57 L82.83,9.82 L83.71,10.29 L84.60,10.47 L85.48,11.09 L86.37,11.42 L87.25,11.65 L88.13,12.27 L89.02,12.61 L89.90,12.88 L90.79,13.34 L91.67,13.94 L92.56,14.46 L93.44,14.85 L94.33,15.19 L95.21,15.81 L96.10,16.39 L96.98,16.67 L97.87,17.23 L98.75,17.60 L99.64,18.10 L100.52,18.62 L101.41,19.31 L102.30,19.69 L103.18,20.39 L104.07,20.89 L104.95,21.37 L105.84,21.67 L106.72,22.19 L107.61,22.92 L108.49,23.37 L109.38,23.84 L110.26,24.31 L111.14,24.76 L112.03,25.22 L112.91,25.73 L113.80,26.02" fill="none" stroke="#3a5d84" stroke-width="1.15" stroke-linejoin="round"/><circle cx="53.00" cy="30.30" r="1.9" fill="#ff8a00"/><circle cx="113.80" cy="26.02" r="1.9" fill="#ff8a00"/><circle cx="71.32" cy="7.00" r="1.9" fill="#22c4dc"/></svg>
<svg class="a" style="left:1060px;top:782.6px;" width="140" height="38" viewBox="0 0 140 38"><path d="M7.60,30.30 L8.48,30.28 L9.37,30.11 L10.25,30.27 L11.14,30.30 L12.02,30.04 L12.91,29.38 L13.79,29.12 L14.68,28.67 L15.56,27.81 L16.45,27.20 L17.33,26.60 L18.22,25.80 L19.11,25.39 L19.99,24.73 L20.88,24.57 L21.76,23.73 L22.64,23.03 L23.53,22.86 L24.41,22.30 L25.30,21.39 L26.18,20.75 L27.07,20.67 L27.95,19.83 L28.84,19.58 L29.72,18.72 L30.61,18.27 L31.49,17.99 L32.38,17.51 L33.26,16.72 L34.15,16.38 L35.03,15.77 L35.92,15.52 L36.80,15.10 L37.69,14.31 L38.57,14.05 L39.46,13.73 L40.35,13.30 L41.23,12.80 L42.12,12.42 L43.00,11.93 L43.88,11.85 L44.77,11.27 L45.65,11.02 L46.54,10.60 L47.42,10.31 L48.31,10.00 L49.19,9.68 L50.08,9.37 L50.96,9.29 L51.85,9.11 L52.73,8.78 L53.62,8.51 L54.50,8.52 L55.39,8.33 L56.27,8.31 L57.16,7.82 L58.04,7.54 L58.93,7.75 L59.81,7.75 L60.70,7.63 L61.59,7.43 L62.47,7.43 L63.36,7.00 L64.24,7.47 L65.12,7.30 L66.01,7.40 L66.89,7.11 L67.78,7.06 L68.66,7.43 L69.55,7.55 L70.43,7.40 L71.32,7.41 L72.20,7.32 L73.09,7.92 L73.97,8.01 L74.86,8.11 L75.74,8.25 L76.63,8.41 L77.51,8.32 L78.40,8.59 L79.28,9.01 L80.17,9.26 L81.05,9.45 L81.94,9.77 L82.83,9.71 L83.71,10.24 L84.60,10.41 L85.48,10.57 L86.37,11.08 L87.25,11.53 L88.13,11.53 L89.02,11.88 L89.90,12.57 L90.79,12.83 L91.67,13.00 L92.56,13.67 L93.44,14.23 L94.33,14.75 L95.21,14.69 L96.10,15.22 L96.98,15.91 L97.87,16.30 L98.75,16.78 L99.64,17.40 L100.52,17.50 L101.41,18.18 L102.30,18.93 L103.18,19.57 L104.07,19.84 L104.95,20.43 L105.84,20.73 L106.72,21.32 L107.61,21.93 L108.49,22.73 L109.38,23.29 L110.26,23.77 L111.14,24.37 L112.03,24.61 L112.91,25.38 L113.80,25.89 L113.80,31.10 L7.60,31.10 Z" fill="#cbdbf8" stroke="none"/><path d="M7.60,30.30 L8.48,30.28 L9.37,30.11 L10.25,30.27 L11.14,30.30 L12.02,30.04 L12.91,29.38 L13.79,29.12 L14.68,28.67 L15.56,27.81 L16.45,27.20 L17.33,26.60 L18.22,25.80 L19.11,25.39 L19.99,24.73 L20.88,24.57 L21.76,23.73 L22.64,23.03 L23.53,22.86 L24.41,22.30 L25.30,21.39 L26.18,20.75 L27.07,20.67 L27.95,19.83 L28.84,19.58 L29.72,18.72 L30.61,18.27 L31.49,17.99 L32.38,17.51 L33.26,16.72 L34.15,16.38 L35.03,15.77 L35.92,15.52 L36.80,15.10 L37.69,14.31 L38.57,14.05 L39.46,13.73 L40.35,13.30 L41.23,12.80 L42.12,12.42 L43.00,11.93 L43.88,11.85 L44.77,11.27 L45.65,11.02 L46.54,10.60 L47.42,10.31 L48.31,10.00 L49.19,9.68 L50.08,9.37 L50.96,9.29 L51.85,9.11 L52.73,8.78 L53.62,8.51 L54.50,8.52 L55.39,8.33 L56.27,8.31 L57.16,7.82 L58.04,7.54 L58.93,7.75 L59.81,7.75 L60.70,7.63 L61.59,7.43 L62.47,7.43 L63.36,7.00 L64.24,7.47 L65.12,7.30 L66.01,7.40 L66.89,7.11 L67.78,7.06 L68.66,7.43 L69.55,7.55 L70.43,7.40 L71.32,7.41 L72.20,7.32 L73.09,7.92 L73.97,8.01 L74.86,8.11 L75.74,8.25 L76.63,8.41 L77.51,8.32 L78.40,8.59 L79.28,9.01 L80.17,9.26 L81.05,9.45 L81.94,9.77 L82.83,9.71 L83.71,10.24 L84.60,10.41 L85.48,10.57 L86.37,11.08 L87.25,11.53 L88.13,11.53 L89.02,11.88 L89.90,12.57 L90.79,12.83 L91.67,13.00 L92.56,13.67 L93.44,14.23 L94.33,14.75 L95.21,14.69 L96.10,15.22 L96.98,15.91 L97.87,16.30 L98.75,16.78 L99.64,17.40 L100.52,17.50 L101.41,18.18 L102.30,18.93 L103.18,19.57 L104.07,19.84 L104.95,20.43 L105.84,20.73 L106.72,21.32 L107.61,21.93 L108.49,22.73 L109.38,23.29 L110.26,23.77 L111.14,24.37 L112.03,24.61 L112.91,25.38 L113.80,25.89" fill="none" stroke="#3a5d84" stroke-width="1.15" stroke-linejoin="round"/><circle cx="7.60" cy="30.30" r="1.9" fill="#ff8a00"/><circle cx="113.80" cy="25.89" r="1.9" fill="#ff8a00"/><circle cx="63.36" cy="7.00" r="1.9" fill="#22c4dc"/></svg>
<svg class="a" style="left:1060px;top:821.2px;" width="140" height="38" viewBox="0 0 140 38"><path d="M7.60,30.30 L8.48,30.30 L9.37,30.27 L10.25,30.30 L11.14,30.05 L12.02,30.30 L12.91,29.66 L13.79,29.27 L14.68,28.89 L15.56,29.15 L16.45,28.53 L17.33,27.65 L18.22,27.75 L19.11,26.91 L19.99,26.42 L20.88,25.47 L21.76,25.30 L22.64,24.53 L23.53,24.52 L24.41,23.55 L25.30,23.37 L26.18,22.38 L27.07,22.61 L27.95,21.41 L28.84,21.45 L29.72,20.62 L30.61,20.12 L31.49,19.94 L32.38,18.81 L33.26,18.77 L34.15,18.27 L35.03,17.99 L35.92,17.28 L36.80,16.65 L37.69,15.94 L38.57,15.80 L39.46,15.04 L40.35,15.12 L41.23,18.53 L42.12,25.75 L43.00,27.10 L43.88,18.92 L44.77,12.51 L45.65,12.71 L46.54,12.00 L47.42,11.33 L48.31,11.42 L49.19,10.78 L50.08,10.56 L50.96,10.66 L51.85,9.47 L52.73,9.36 L53.62,9.64 L54.50,9.02 L55.39,9.08 L56.27,8.79 L57.16,8.44 L58.04,8.47 L58.93,8.27 L59.81,8.07 L60.70,7.68 L61.59,7.94 L62.47,7.89 L63.36,7.31 L64.24,7.62 L65.12,7.00 L66.01,7.32 L66.89,7.15 L67.78,7.52 L68.66,7.08 L69.55,7.79 L70.43,7.80 L71.32,7.91 L72.20,7.47 L73.09,7.54 L73.97,8.15 L74.86,8.08 L75.74,7.84 L76.63,8.24 L77.51,8.89 L78.40,8.96 L79.28,9.25 L80.17,9.52 L81.05,9.51 L81.94,10.08 L82.83,9.58 L83.71,10.33 L84.60,10.57 L85.48,10.77 L86.37,11.00 L87.25,11.30 L88.13,12.06 L89.02,12.49 L89.90,12.81 L90.79,13.57 L91.67,13.63 L92.56,13.78 L93.44,13.95 L94.33,14.58 L95.21,15.15 L96.10,15.66 L96.98,16.67 L97.87,16.86 L98.75,17.34 L99.64,17.55 L100.52,18.55 L101.41,18.81 L102.30,19.20 L103.18,19.45 L104.07,25.37 L104.95,29.15 L105.84,24.08 L106.72,23.42 L107.61,23.42 L108.49,23.42 L109.38,23.52 L110.26,23.91 L111.14,24.77 L112.03,24.76 L112.91,25.02 L113.80,25.97 L113.80,31.10 L7.60,31.10 Z" fill="#cbdbf8" stroke="none"/><path d="M7.60,30.30 L8.48,30.30 L9.37,30.27 L10.25,30.30 L11.14,30.05 L12.02,30.30 L12.91,29.66 L13.79,29.27 L14.68,28.89 L15.56,29.15 L16.45,28.53 L17.33,27.65 L18.22,27.75 L19.11,26.91 L19.99,26.42 L20.88,25.47 L21.76,25.30 L22.64,24.53 L23.53,24.52 L24.41,23.55 L25.30,23.37 L26.18,22.38 L27.07,22.61 L27.95,21.41 L28.84,21.45 L29.72,20.62 L30.61,20.12 L31.49,19.94 L32.38,18.81 L33.26,18.77 L34.15,18.27 L35.03,17.99 L35.92,17.28 L36.80,16.65 L37.69,15.94 L38.57,15.80 L39.46,15.04 L40.35,15.12 L41.23,18.53 L42.12,25.75 L43.00,27.10 L43.88,18.92 L44.77,12.51 L45.65,12.71 L46.54,12.00 L47.42,11.33 L48.31,11.42 L49.19,10.78 L50.08,10.56 L50.96,10.66 L51.85,9.47 L52.73,9.36 L53.62,9.64 L54.50,9.02 L55.39,9.08 L56.27,8.79 L57.16,8.44 L58.04,8.47 L58.93,8.27 L59.81,8.07 L60.70,7.68 L61.59,7.94 L62.47,7.89 L63.36,7.31 L64.24,7.62 L65.12,7.00 L66.01,7.32 L66.89,7.15 L67.78,7.52 L68.66,7.08 L69.55,7.79 L70.43,7.80 L71.32,7.91 L72.20,7.47 L73.09,7.54 L73.97,8.15 L74.86,8.08 L75.74,7.84 L76.63,8.24 L77.51,8.89 L78.40,8.96 L79.28,9.25 L80.17,9.52 L81.05,9.51 L81.94,10.08 L82.83,9.58 L83.71,10.33 L84.60,10.57 L85.48,10.77 L86.37,11.00 L87.25,11.30 L88.13,12.06 L89.02,12.49 L89.90,12.81 L90.79,13.57 L91.67,13.63 L92.56,13.78 L93.44,13.95 L94.33,14.58 L95.21,15.15 L96.10,15.66 L96.98,16.67 L97.87,16.86 L98.75,17.34 L99.64,17.55 L100.52,18.55 L101.41,18.81 L102.30,19.20 L103.18,19.45 L104.07,25.37 L104.95,29.15 L105.84,24.08 L106.72,23.42 L107.61,23.42 L108.49,23.42 L109.38,23.52 L110.26,23.91 L111.14,24.77 L112.03,24.76 L112.91,25.02 L113.80,25.97" fill="none" stroke="#3a5d84" stroke-width="1.15" stroke-linejoin="round"/><circle cx="7.60" cy="30.30" r="1.9" fill="#ff8a00"/><circle cx="113.80" cy="25.97" r="1.9" fill="#ff8a00"/><circle cx="65.12" cy="7.00" r="1.9" fill="#22c4dc"/></svg>
<div class="t" style="left:311.20px;top:955.47px;font-size:14.8px;color:#555;letter-spacing:-0.190px;">Showing 1 to 10 of 87 entries</div>
<div class="a" style="left:1393.2px;top:956px;width:87.6px;height:37px;border:1px solid #dcdcdc;background:#fff"></div>
<div class="t" style="left:1405.77px;top:966.77px;font-size:14.8px;color:#6c7b88;letter-spacing:0.555px;">Previous</div>
<div class="a" style="left:1479.8px;top:956px;width:34.1px;height:37px;background:#375a7f"></div>
<div class="t" style="left:1492.73px;top:966.77px;font-size:14.8px;color:#fff;">1</div>
<div class="a" style="left:1513.9px;top:956px;width:39.0px;height:37px;border:1px solid #dcdcdc;background:#fff"></div>
<div class="t" style="left:1528.78px;top:966.77px;font-size:14.8px;color:#6c7b88;">2</div>
<div class="a" style="left:1551.9px;top:956px;width:39.0px;height:37px;border:1px solid #dcdcdc;background:#fff"></div>
<div class="t" style="left:1566.78px;top:966.77px;font-size:14.8px;color:#6c7b88;">3</div>
<div class="a" style="left:1589.9px;top:956px;width:39.9px;height:37px;border:1px solid #dcdcdc;background:#fff"></div>
<div class="t" style="left:1605.23px;top:966.77px;font-size:14.8px;color:#6c7b88;">4</div>
<div class="a" style="left:1628.8px;top:956px;width:39.0px;height:37px;border:1px solid #dcdcdc;background:#fff"></div>
<div class="t" style="left:1643.68px;top:966.77px;font-size:14.8px;color:#6c7b88;">5</div>
<div class="a" style="left:1702.1px;top:956px;width:39.9px;height:37px;border:1px solid #dcdcdc;background:#fff"></div>
<div class="t" style="left:1717.43px;top:966.77px;font-size:14.8px;color:#6c7b88;">9</div>
<div class="a" style="left:1741px;top:956px;width:60.7px;height:37px;border:1px solid #dcdcdc;background:#fff"></div>
<div class="t" style="left:1755.13px;top:966.77px;font-size:14.8px;color:#6c7b88;letter-spacing:0.337px;">Next</div>
<div class="t" style="left:1680.00px;top:969.14px;font-size:12px;color:#6c7b88;transform:scaleX(0.8998);transform-origin:0 0;">...</div>
<div class="t" style="left:255.20px;top:1139.13px;font-size:13.2px;color:#5b6b7b;font-weight:bold;letter-spacing:0.036px;">SunSights Live Version :</div>
<div class="t" style="left:413.90px;top:1139.13px;font-size:13.2px;color:#707d8a;transform:scaleX(0.9360);transform-origin:0 0;">V_4.0.4.9</div>
<div class="t" style="left:255.20px;top:1159.53px;font-size:13.2px;color:#5b6b7b;font-weight:bold;letter-spacing:0.221px;">Website :</div>
<div class="t" style="left:318.80px;top:1159.53px;font-size:13.2px;color:#707d8a;letter-spacing:0.723px;">www.getsunsights.com</div>
<div class="t" style="left:861.90px;top:1188.69px;font-size:13.6px;color:#6f7c89;letter-spacing:0.049px;">Copyright © 2018-2025, System Level Solutions (India) Pvt. Ltd.</div>
<div class="t" style="left:1615.30px;top:1138.83px;font-size:13.2px;color:#5b6b7b;font-weight:bold;letter-spacing:-0.193px;">Follow us :</div>
<div class="a" style="left:1615px;top:1156px;width:30px;height:30px;border-radius:50%;background:#94b92f"></div>
<svg class="a" style="left:1622px;top:1161px;transform:scale(0.92);transform-origin:50% 50%;" width="20" height="20" viewBox="0 0 20 20"><path d="M8.6 5.2 L10.2 5.2 L10.2 2.6 L8.4 2.6 C6.2 2.6 5.4 4 5.4 5.8 L5.4 7.4 L3.8 7.4 L3.8 10 L5.4 10 L5.4 17.4 L8.2 17.4 L8.2 10 L10.1 10 L10.4 7.4 L8.2 7.4 L8.2 6.1 C8.2 5.5 8.3 5.2 8.6 5.2 Z" fill="#fff"/></svg>
<div class="a" style="left:1654px;top:1156px;width:30px;height:30px;border-radius:50%;background:#94b92f"></div>
<svg class="a" style="left:1659.5px;top:1161.5px;transform:scale(0.8);transform-origin:50% 50%;" width="20" height="20" viewBox="0 0 20 20"><path d="M17 5.6 C16.4 5.9 15.8 6 15.2 6.1 C15.9 5.7 16.3 5.1 16.6 4.4 C16 4.8 15.3 5 14.6 5.2 C13.4 3.9 11.2 3.9 10 5.2 C9.3 5.9 9 7 9.3 8 C6.7 7.9 4.4 6.7 2.8 4.7 C2 6.1 2.4 7.9 3.8 8.8 C3.3 8.8 2.8 8.6 2.4 8.4 C2.4 9.9 3.4 11.2 4.9 11.5 C4.4 11.7 3.9 11.7 3.4 11.6 C3.8 12.9 5 13.8 6.4 13.8 C5 14.9 3.2 15.4 1.5 15.2 C8.8 19.6 17.3 14.6 16.9 6.8 C17.3 6.3 17 5.6 17 5.6 Z" fill="#fff"/></svg>
<div class="a" style="left:1694px;top:1156px;width:30px;height:30px;border-radius:50%;background:#94b92f"></div>
<svg class="a" style="left:1699px;top:1161px;" width="20" height="20" viewBox="0 0 20 20"><rect x="4" y="7.2" width="2.6" height="8.6" fill="#fff"/><circle cx="5.3" cy="4.9" r="1.5" fill="#fff"/><path d="M8.4 7.2 L10.9 7.2 L10.9 8.4 C11.4 7.5 12.4 7 13.6 7 C15.8 7 16.4 8.4 16.4 10.4 L16.4 15.8 L13.8 15.8 L13.8 11 C13.8 10 13.6 9.3 12.6 9.3 C11.5 9.3 11 10 11 11.2 L11 15.8 L8.4 15.8 Z" fill="#fff"/></svg>
<div class="a" style="left:1733px;top:1156px;width:30px;height:30px;border-radius:50%;background:#94b92f"></div>
<svg class="a" style="left:1738px;top:1161px;" width="20" height="20" viewBox="0 0 20 20"><rect x="3" y="5.5" width="14" height="9.6" rx="2.6" fill="#fff"/><path d="M8.6 8 L12.2 10.3 L8.6 12.6 Z" fill="#94b92f"/></svg>
<div class="a" style="left:1773px;top:1156px;width:30px;height:30px;border-radius:50%;background:#94b92f"></div>
<svg class="a" style="left:1778px;top:1161px;" width="20" height="20" viewBox="0 0 20 20"><rect x="4.6" y="4.6" width="10.8" height="10.8" rx="3" fill="none" stroke="#fff" stroke-width="1.5"/><circle cx="10" cy="10" r="2.6" fill="none" stroke="#fff" stroke-width="1.5"/><circle cx="13.3" cy="6.7" r="0.8" fill="#fff"/></svg>
</body></html>
